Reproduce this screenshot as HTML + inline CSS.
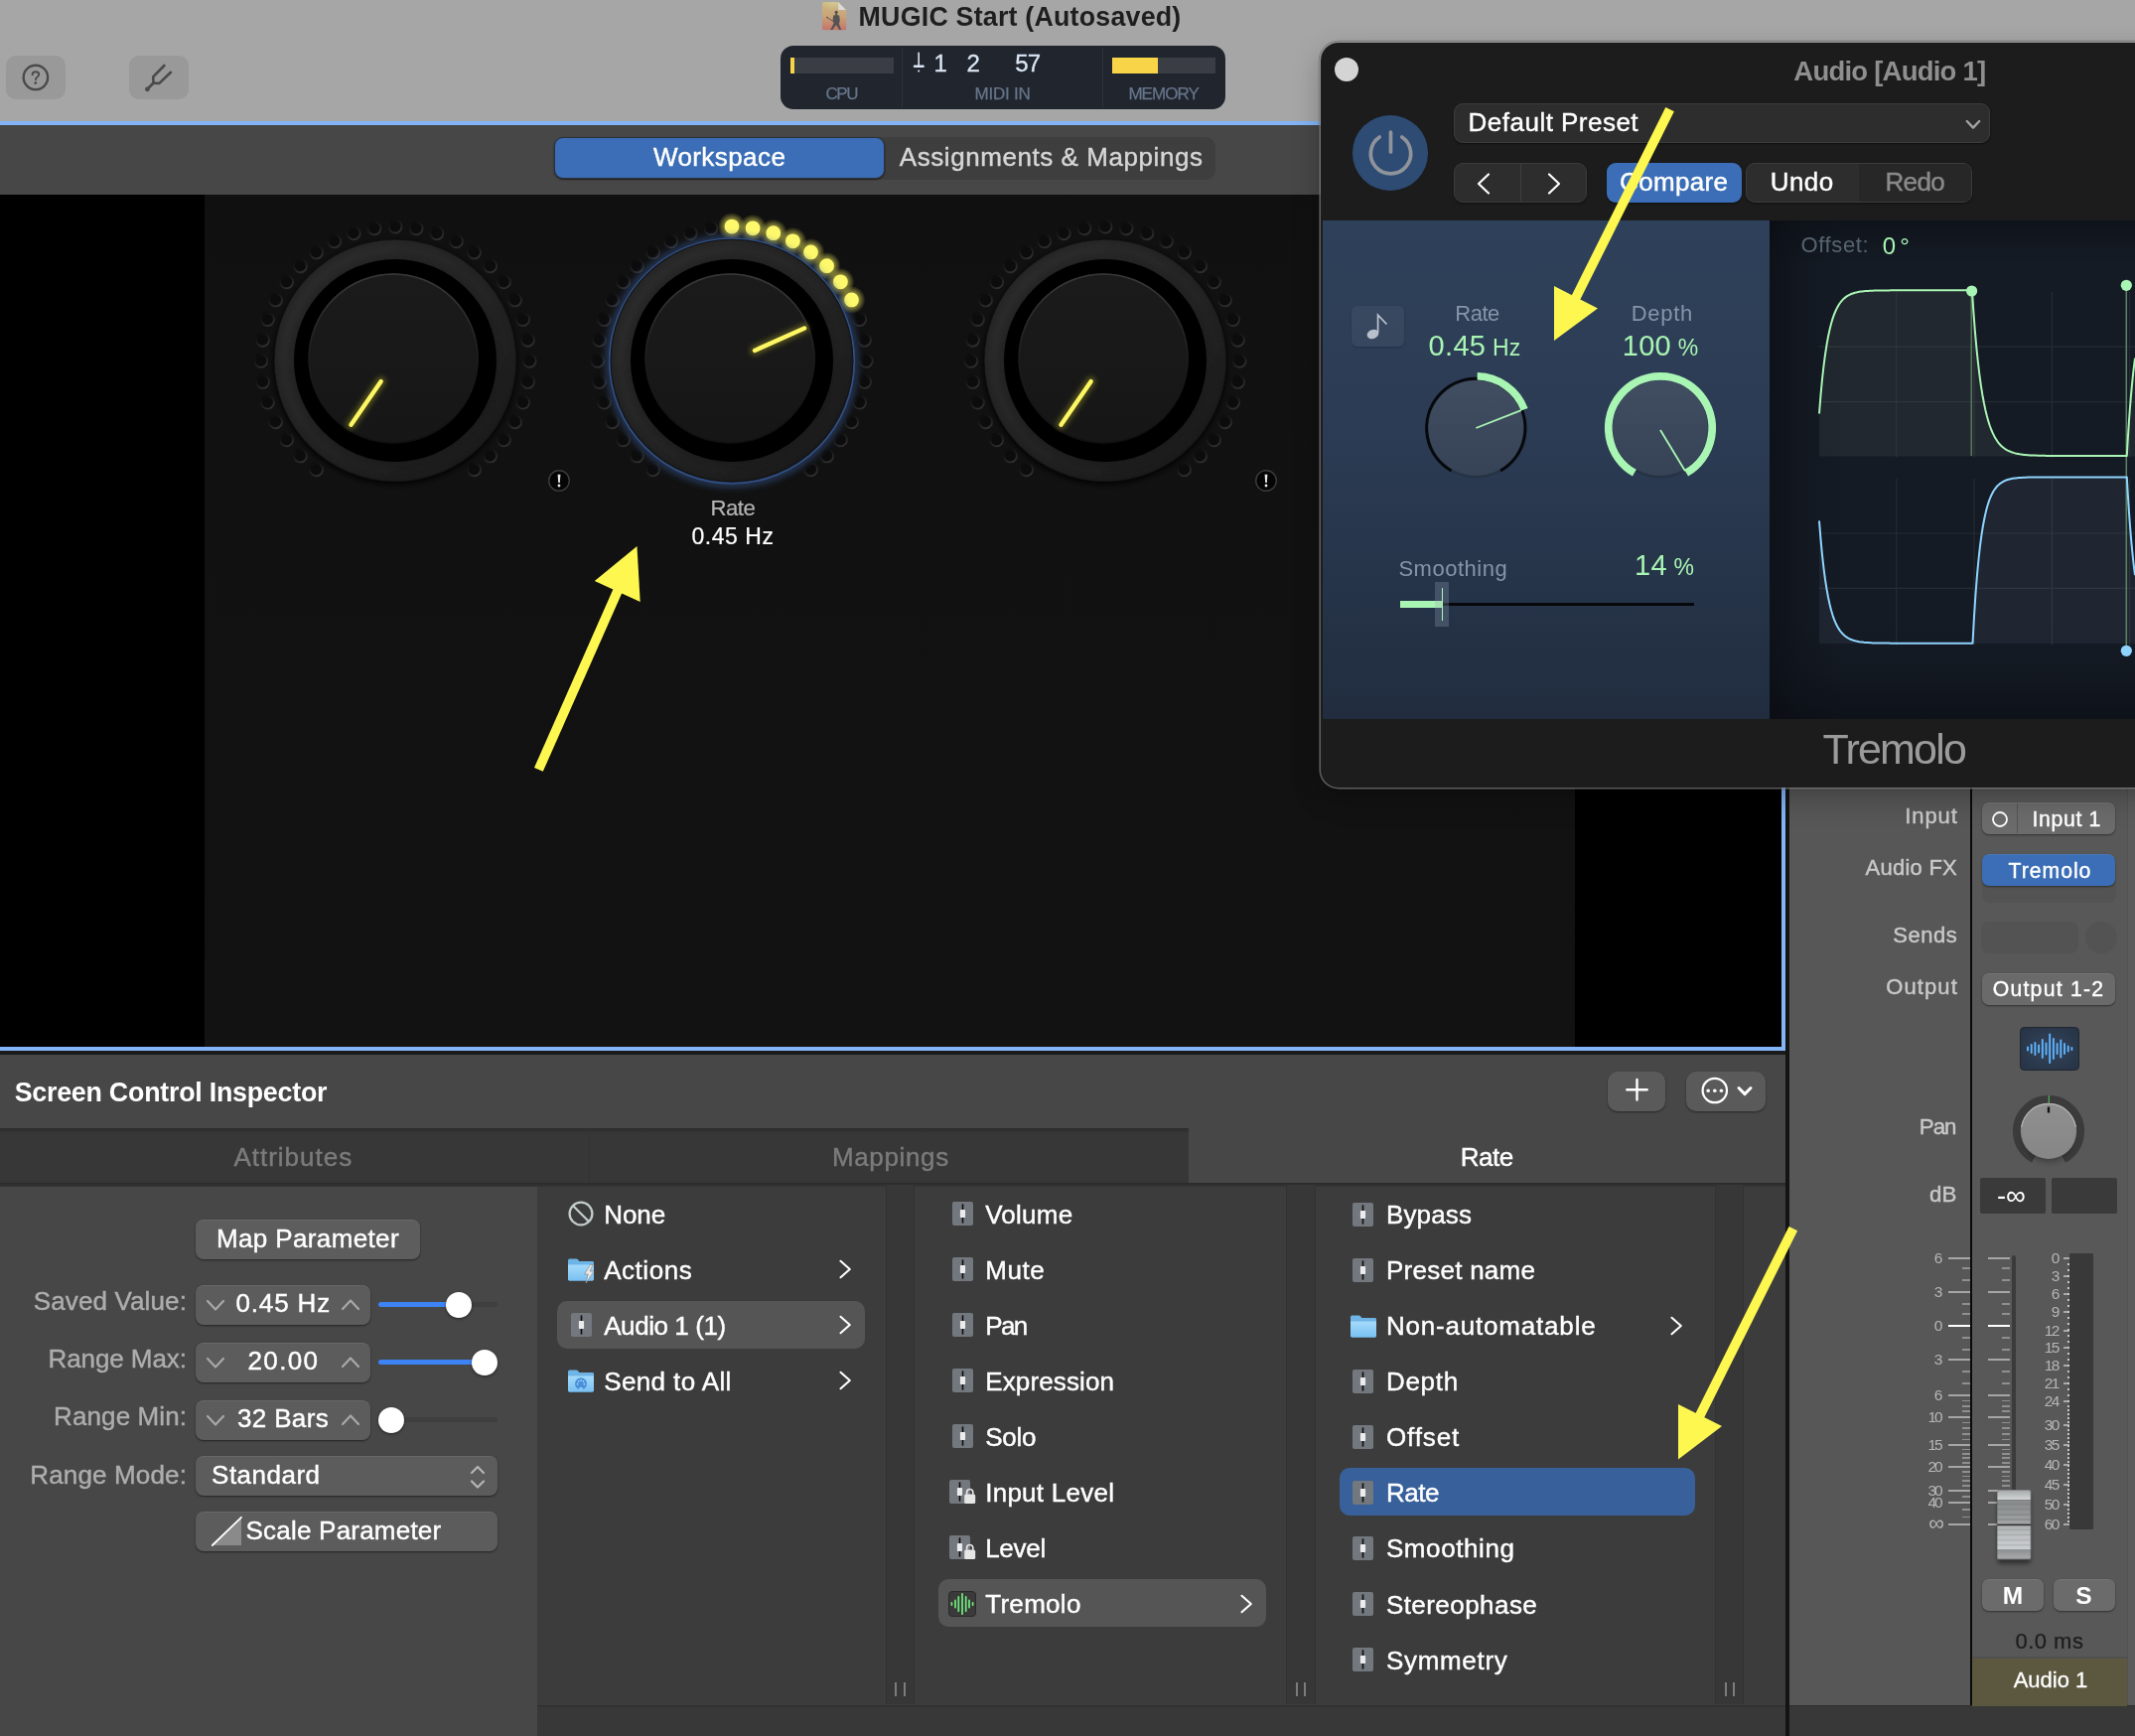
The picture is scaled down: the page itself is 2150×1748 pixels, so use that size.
<!DOCTYPE html>
<html><head><meta charset="utf-8"><title>MainStage</title>
<style>
html,body{margin:0;padding:0;background:#000;}
body{width:2150px;height:1748px;overflow:hidden;position:relative;font-family:"Liberation Sans",sans-serif;}
#r{position:absolute;left:0;top:0;width:2150px;height:1748px;overflow:hidden;}
.t{will-change:opacity;}
#r div{position:absolute;box-sizing:border-box;}
#r svg{position:absolute;overflow:visible;}
.t{height:0;}
</style></head><body><div id="r">
<div style="left:0px;top:0px;width:2150px;height:122px;background:#a6a6a6;"></div>
<div style="left:6px;top:56px;width:60px;height:44px;background:#999999;border-radius:10px;"></div>
<div style="left:130px;top:56px;width:60px;height:44px;background:#999999;border-radius:10px;"></div>
<svg style="left:0;top:0" width="220" height="122" viewBox="0 0 220 122" fill="none" stroke="#4a4a4a" stroke-width="2.4" stroke-linecap="round" stroke-linejoin="round">
<circle cx="35.9" cy="77.9" r="12.2"/>
<path d="M32.6 75.2 C32.6 73.2 34 72.2 35.9 72.2 C37.9 72.2 39.2 73.4 39.2 75 C39.2 77.4 35.9 77.4 35.9 80.2" stroke-width="1.9"/>
<circle cx="35.8" cy="83.6" r="1.4" fill="#4a4a4a" stroke="none"/>
<circle cx="148.4" cy="89.8" r="2.4" fill="#4a4a4a" stroke="none"/>
<path d="M148.4 89.8 L154.6 83.6" stroke-width="2.8"/>
<path d="M165.4 66 L154.2 77.4 L154.6 83.6 L160.4 83.9 L172 72.8" stroke-width="2.6"/>
</svg>
<svg style="left:827.9px;top:2px" width="24.2" height="28.2" viewBox="0 0 24.2 28.2">
<defs><linearGradient id="ti" x1="0" y1="0" x2="0" y2="1"><stop offset="0" stop-color="#cbb681"/><stop offset="0.5" stop-color="#c9a578"/><stop offset="1" stop-color="#c5746a"/></linearGradient>
<radialGradient id="ti2" cx=".5" cy="0" r=".6"><stop offset="0" stop-color="#d2cc94" stop-opacity=".9"/><stop offset="1" stop-color="#d2cc94" stop-opacity="0"/></radialGradient></defs>
<path d="M1.4 0 H16.2 L24.2 8 V26.8 Q24.2 28.2 22.8 28.2 H1.4 Q0 28.2 0 26.8 V1.4 Q0 0 1.4 0Z" fill="url(#ti)"/>
<path d="M1.4 0 H16.2 L24.2 8 V14 H0 V1.4 Q0 0 1.4 0Z" fill="url(#ti2)"/>
<path d="M16.2 0.2 L24 8 H16.2Z" fill="#dadada"/>
<g fill="#545454"><circle cx="14.2" cy="10.3" r="1.6"/><rect x="13.3" y="10.5" width="1.8" height="3"/>
<path d="M11.2 13.6 Q14.2 12.4 17.2 13.6 L17.8 18.5 L16.9 22 L19.3 28 H17.2 L14.1 22.9 L10.4 28 H8.2 L11.6 21.5 L10.6 18.5Z"/>
<path d="M11.4 19.6 L4.8 15.6" stroke="#545454" stroke-width="0.9" stroke-linecap="round"/><circle cx="4.9" cy="15.5" r="0.8"/></g>
</svg>
<div class="t" style="top:16.6px;font-size:26.8px;color:#1e1e1e;line-height:0;white-space:nowrap;font-weight:700;letter-spacing:0.207px;left:864.6px;">MUGIC Start (Autosaved)</div>
<div style="left:786px;top:46px;width:448px;height:64px;background:#21252e;border-radius:13px;"></div>
<div style="left:908px;top:48px;width:1px;height:60px;background:#2d323c;"></div>
<div style="left:1110px;top:48px;width:1px;height:60px;background:#2d323c;"></div>
<div style="left:796px;top:58px;width:104px;height:16px;background:#3a3d44;"></div>
<div style="left:796px;top:58px;width:4px;height:16px;background:#f8d548;"></div>
<div style="left:1120px;top:58px;width:104px;height:16px;background:#3a3d44;"></div>
<div style="left:1120px;top:58px;width:46px;height:16px;background:#f8d548;"></div>
<div class="t" style="top:94.5px;font-size:17px;color:#66758a;line-height:0;white-space:nowrap;letter-spacing:-1.397px;-webkit-text-stroke:0.25px #66758a;left:347.3015px;width:1000px;text-align:center;">CPU</div>
<div class="t" style="top:94.5px;font-size:17px;color:#66758a;line-height:0;white-space:nowrap;letter-spacing:-0.235px;-webkit-text-stroke:0.25px #66758a;left:509.4825px;width:1000px;text-align:center;">MIDI IN</div>
<div class="t" style="top:94.5px;font-size:17px;color:#66758a;line-height:0;white-space:nowrap;letter-spacing:-0.959px;-webkit-text-stroke:0.25px #66758a;left:671.6204999999999px;width:1000px;text-align:center;">MEMORY</div>
<svg style="left:918px;top:52px" width="16" height="24" viewBox="0 0 16 24" fill="none" stroke="#dbe7f5" stroke-width="1.6" stroke-linecap="round">
<path d="M7.2 1.2 V14"/><path d="M3 14.8 H11.6" stroke-width="2.5"/><circle cx="7.2" cy="19.5" r="1" fill="#dbe7f5" stroke="none"/></svg>
<div class="t" style="top:63.7px;font-size:24px;color:#dbe7f5;line-height:0;white-space:nowrap;-webkit-text-stroke:0.3px #dbe7f5;left:447.29999999999995px;width:1000px;text-align:center;">1</div>
<div class="t" style="top:63.7px;font-size:24px;color:#dbe7f5;line-height:0;white-space:nowrap;-webkit-text-stroke:0.3px #dbe7f5;left:480.20000000000005px;width:1000px;text-align:center;">2</div>
<div class="t" style="top:63.7px;font-size:24px;color:#dbe7f5;line-height:0;white-space:nowrap;letter-spacing:-0.896px;-webkit-text-stroke:0.3px #dbe7f5;left:534.6519999999999px;width:1000px;text-align:center;">57</div>
<div style="left:0px;top:126px;width:1798px;height:70px;background:#474747;"></div>
<div style="left:0px;top:122px;width:1798px;height:4px;background:#82b4f6;"></div>
<div style="left:557.5px;top:137.5px;width:666.3px;height:43.5px;background:#3e3e3e;border-radius:10px;"></div>
<div style="left:558px;top:138px;width:333px;height:42px;background:#3b6eb6;border-radius:9px;border:1px solid #2c3038;box-shadow:0 1px 2px rgba(0,0,0,.5);"></div>
<div class="t" style="top:157.6px;font-size:26px;color:#fff;line-height:0;white-space:nowrap;letter-spacing:0.429px;-webkit-text-stroke:0.42px #fff;left:224.61449999999996px;width:1000px;text-align:center;">Workspace</div>
<div class="t" style="top:157.6px;font-size:26px;color:#d6d6d6;line-height:0;white-space:nowrap;letter-spacing:0.563px;-webkit-text-stroke:0.42px #d6d6d6;left:558.6815000000001px;width:1000px;text-align:center;">Assignments &amp; Mappings</div>
<div style="left:0px;top:196px;width:1794px;height:858px;background:#000;"></div>
<div style="left:206.4px;top:196px;width:1379.2px;height:858px;background:#111;background:linear-gradient(#101010,#111 12%,#121212 100%);"></div>
<div style="left:1794px;top:122px;width:4px;height:936px;background:#82b4f6;"></div>
<div style="left:0px;top:1054px;width:1798px;height:4px;background:#82b4f6;"></div>
<div style="left:1798px;top:122px;width:4px;height:1626px;background:#141414;"></div>
<svg width="0" height="0" style="left:0;top:0"><defs>
<radialGradient id="glow"><stop offset="0.45" stop-color="#f4ee5a" stop-opacity=".6"/><stop offset="1" stop-color="#f4ee5a" stop-opacity="0"/></radialGradient>
<linearGradient id="dotedge" x1="0.2" y1="0" x2="0.8" y2="1"><stop offset="0" stop-color="#0b0b0b"/><stop offset="0.5" stop-color="#1c1c1c"/><stop offset="1" stop-color="#313131"/></linearGradient>
<linearGradient id="ringhi" x1="0" y1="0" x2="1" y2="1"><stop offset="0" stop-color="#323232"/><stop offset="0.55" stop-color="#262626"/><stop offset="1" stop-color="#171717"/></linearGradient>
<linearGradient id="ring" x1="0.15" y1="0" x2="0.85" y2="1"><stop offset="0" stop-color="#272727"/><stop offset="0.5" stop-color="#222"/><stop offset="1" stop-color="#1a1a1a"/></linearGradient>
<linearGradient id="cap" x1="0" y1="0" x2="0" y2="1"><stop offset="0" stop-color="#1b1b1b"/><stop offset="1" stop-color="#161616"/></linearGradient>
<linearGradient id="capedge" x1="0" y1="0" x2="0" y2="1"><stop offset="0" stop-color="#3a3a3a"/><stop offset="0.5" stop-color="#1c1c1c"/><stop offset="1" stop-color="#101010"/></linearGradient>
<filter id="bl" x="-20%" y="-20%" width="140%" height="140%"><feGaussianBlur stdDeviation="3"/></filter>
<filter id="bl2" x="-50%" y="-50%" width="200%" height="200%"><feGaussianBlur stdDeviation="2.5"/></filter>
</defs></svg>
<svg style="left:237.7px;top:203.0px" width="320" height="320" viewBox="-160.0 -160.0 320 320"><circle cx="-79.5" cy="109.7" r="6.5" fill="#0c0c0c" stroke="url(#dotedge)" stroke-width="1.9"/><circle cx="-95.6" cy="95.9" r="6.5" fill="#0c0c0c" stroke="url(#dotedge)" stroke-width="1.9"/><circle cx="-109.4" cy="79.8" r="6.5" fill="#0c0c0c" stroke="url(#dotedge)" stroke-width="1.9"/><circle cx="-120.5" cy="61.7" r="6.5" fill="#0c0c0c" stroke="url(#dotedge)" stroke-width="1.9"/><circle cx="-128.6" cy="42.1" r="6.5" fill="#0c0c0c" stroke="url(#dotedge)" stroke-width="1.9"/><circle cx="-133.5" cy="21.4" r="6.5" fill="#0c0c0c" stroke="url(#dotedge)" stroke-width="1.9"/><circle cx="-135.2" cy="0.3" r="6.5" fill="#0c0c0c" stroke="url(#dotedge)" stroke-width="1.9"/><circle cx="-133.5" cy="-20.8" r="6.5" fill="#0c0c0c" stroke="url(#dotedge)" stroke-width="1.9"/><circle cx="-128.6" cy="-41.5" r="6.5" fill="#0c0c0c" stroke="url(#dotedge)" stroke-width="1.9"/><circle cx="-120.5" cy="-61.1" r="6.5" fill="#0c0c0c" stroke="url(#dotedge)" stroke-width="1.9"/><circle cx="-109.4" cy="-79.2" r="6.5" fill="#0c0c0c" stroke="url(#dotedge)" stroke-width="1.9"/><circle cx="-95.6" cy="-95.3" r="6.5" fill="#0c0c0c" stroke="url(#dotedge)" stroke-width="1.9"/><circle cx="-79.5" cy="-109.1" r="6.5" fill="#0c0c0c" stroke="url(#dotedge)" stroke-width="1.9"/><circle cx="-61.4" cy="-120.2" r="6.5" fill="#0c0c0c" stroke="url(#dotedge)" stroke-width="1.9"/><circle cx="-41.8" cy="-128.3" r="6.5" fill="#0c0c0c" stroke="url(#dotedge)" stroke-width="1.9"/><circle cx="-21.1" cy="-133.2" r="6.5" fill="#0c0c0c" stroke="url(#dotedge)" stroke-width="1.9"/><circle cx="0.0" cy="-134.9" r="6.5" fill="#0c0c0c" stroke="url(#dotedge)" stroke-width="1.9"/><circle cx="21.1" cy="-133.2" r="6.5" fill="#0c0c0c" stroke="url(#dotedge)" stroke-width="1.9"/><circle cx="41.8" cy="-128.3" r="6.5" fill="#0c0c0c" stroke="url(#dotedge)" stroke-width="1.9"/><circle cx="61.4" cy="-120.2" r="6.5" fill="#0c0c0c" stroke="url(#dotedge)" stroke-width="1.9"/><circle cx="79.5" cy="-109.1" r="6.5" fill="#0c0c0c" stroke="url(#dotedge)" stroke-width="1.9"/><circle cx="95.6" cy="-95.3" r="6.5" fill="#0c0c0c" stroke="url(#dotedge)" stroke-width="1.9"/><circle cx="109.4" cy="-79.2" r="6.5" fill="#0c0c0c" stroke="url(#dotedge)" stroke-width="1.9"/><circle cx="120.5" cy="-61.1" r="6.5" fill="#0c0c0c" stroke="url(#dotedge)" stroke-width="1.9"/><circle cx="128.6" cy="-41.5" r="6.5" fill="#0c0c0c" stroke="url(#dotedge)" stroke-width="1.9"/><circle cx="133.5" cy="-20.8" r="6.5" fill="#0c0c0c" stroke="url(#dotedge)" stroke-width="1.9"/><circle cx="135.2" cy="0.3" r="6.5" fill="#0c0c0c" stroke="url(#dotedge)" stroke-width="1.9"/><circle cx="133.5" cy="21.4" r="6.5" fill="#0c0c0c" stroke="url(#dotedge)" stroke-width="1.9"/><circle cx="128.6" cy="42.1" r="6.5" fill="#0c0c0c" stroke="url(#dotedge)" stroke-width="1.9"/><circle cx="120.5" cy="61.7" r="6.5" fill="#0c0c0c" stroke="url(#dotedge)" stroke-width="1.9"/><circle cx="109.4" cy="79.8" r="6.5" fill="#0c0c0c" stroke="url(#dotedge)" stroke-width="1.9"/><circle cx="95.6" cy="95.9" r="6.5" fill="#0c0c0c" stroke="url(#dotedge)" stroke-width="1.9"/><circle cx="79.5" cy="109.7" r="6.5" fill="#0c0c0c" stroke="url(#dotedge)" stroke-width="1.9"/><circle cx="0" cy="2.5" r="122" fill="#060606" filter="url(#bl)"/><circle cx="0" cy="0" r="122.3" fill="#141414"/><circle cx="0" cy="0" r="121.3" fill="url(#ring)"/><circle cx="0" cy="0" r="112" fill="none" stroke="url(#ringhi)" stroke-width="10" opacity=".55" filter="url(#bl2)"/><circle cx="0" cy="0" r="102" fill="#000"/><circle cx="-1.9" cy="-2.1" r="85.6" fill="url(#cap)"/><circle cx="-1.9" cy="-2.1" r="84.9" fill="none" stroke="url(#capedge)" stroke-width="1.6"/><line x1="-14.3" y1="21.0" x2="-44.5" y2="64.7" stroke="#c9c22a" stroke-width="10" stroke-linecap="round" opacity=".33" filter="url(#bl2)"/><line x1="-14.3" y1="21.0" x2="-44.5" y2="64.7" stroke="#fdf764" stroke-width="4.4" stroke-linecap="round"/></svg>
<svg style="left:577.2px;top:203.0px" width="320" height="320" viewBox="-160.0 -160.0 320 320"><circle cx="-79.5" cy="109.7" r="6.5" fill="#0c0c0c" stroke="url(#dotedge)" stroke-width="1.9"/><circle cx="-95.6" cy="95.9" r="6.5" fill="#0c0c0c" stroke="url(#dotedge)" stroke-width="1.9"/><circle cx="-109.4" cy="79.8" r="6.5" fill="#0c0c0c" stroke="url(#dotedge)" stroke-width="1.9"/><circle cx="-120.5" cy="61.7" r="6.5" fill="#0c0c0c" stroke="url(#dotedge)" stroke-width="1.9"/><circle cx="-128.6" cy="42.1" r="6.5" fill="#0c0c0c" stroke="url(#dotedge)" stroke-width="1.9"/><circle cx="-133.5" cy="21.4" r="6.5" fill="#0c0c0c" stroke="url(#dotedge)" stroke-width="1.9"/><circle cx="-135.2" cy="0.3" r="6.5" fill="#0c0c0c" stroke="url(#dotedge)" stroke-width="1.9"/><circle cx="-133.5" cy="-20.8" r="6.5" fill="#0c0c0c" stroke="url(#dotedge)" stroke-width="1.9"/><circle cx="-128.6" cy="-41.5" r="6.5" fill="#0c0c0c" stroke="url(#dotedge)" stroke-width="1.9"/><circle cx="-120.5" cy="-61.1" r="6.5" fill="#0c0c0c" stroke="url(#dotedge)" stroke-width="1.9"/><circle cx="-109.4" cy="-79.2" r="6.5" fill="#0c0c0c" stroke="url(#dotedge)" stroke-width="1.9"/><circle cx="-95.6" cy="-95.3" r="6.5" fill="#0c0c0c" stroke="url(#dotedge)" stroke-width="1.9"/><circle cx="-79.5" cy="-109.1" r="6.5" fill="#0c0c0c" stroke="url(#dotedge)" stroke-width="1.9"/><circle cx="-61.4" cy="-120.2" r="6.5" fill="#0c0c0c" stroke="url(#dotedge)" stroke-width="1.9"/><circle cx="-41.8" cy="-128.3" r="6.5" fill="#0c0c0c" stroke="url(#dotedge)" stroke-width="1.9"/><circle cx="-21.1" cy="-133.2" r="6.5" fill="#0c0c0c" stroke="url(#dotedge)" stroke-width="1.9"/><circle cx="0.0" cy="-134.9" r="14" fill="url(#glow)"/><circle cx="21.1" cy="-133.2" r="14" fill="url(#glow)"/><circle cx="41.8" cy="-128.3" r="14" fill="url(#glow)"/><circle cx="61.4" cy="-120.2" r="14" fill="url(#glow)"/><circle cx="79.5" cy="-109.1" r="14" fill="url(#glow)"/><circle cx="95.6" cy="-95.3" r="14" fill="url(#glow)"/><circle cx="109.4" cy="-79.2" r="14" fill="url(#glow)"/><circle cx="120.5" cy="-61.1" r="14" fill="url(#glow)"/><circle cx="128.6" cy="-41.5" r="6.5" fill="#0c0c0c" stroke="url(#dotedge)" stroke-width="1.9"/><circle cx="133.5" cy="-20.8" r="6.5" fill="#0c0c0c" stroke="url(#dotedge)" stroke-width="1.9"/><circle cx="135.2" cy="0.3" r="6.5" fill="#0c0c0c" stroke="url(#dotedge)" stroke-width="1.9"/><circle cx="133.5" cy="21.4" r="6.5" fill="#0c0c0c" stroke="url(#dotedge)" stroke-width="1.9"/><circle cx="128.6" cy="42.1" r="6.5" fill="#0c0c0c" stroke="url(#dotedge)" stroke-width="1.9"/><circle cx="120.5" cy="61.7" r="6.5" fill="#0c0c0c" stroke="url(#dotedge)" stroke-width="1.9"/><circle cx="109.4" cy="79.8" r="6.5" fill="#0c0c0c" stroke="url(#dotedge)" stroke-width="1.9"/><circle cx="95.6" cy="95.9" r="6.5" fill="#0c0c0c" stroke="url(#dotedge)" stroke-width="1.9"/><circle cx="79.5" cy="109.7" r="6.5" fill="#0c0c0c" stroke="url(#dotedge)" stroke-width="1.9"/><circle cx="0.0" cy="-134.9" r="7.4" fill="#fef96c"/><circle cx="21.1" cy="-133.2" r="7.4" fill="#fef96c"/><circle cx="41.8" cy="-128.3" r="7.4" fill="#fef96c"/><circle cx="61.4" cy="-120.2" r="7.4" fill="#fef96c"/><circle cx="79.5" cy="-109.1" r="7.4" fill="#fef96c"/><circle cx="95.6" cy="-95.3" r="7.4" fill="#fef96c"/><circle cx="109.4" cy="-79.2" r="7.4" fill="#fef96c"/><circle cx="120.5" cy="-61.1" r="7.4" fill="#fef96c"/><circle cx="0" cy="0.5" r="124.5" fill="none" stroke="#3d64a6" stroke-width="6" opacity=".5" filter="url(#bl)"/><circle cx="0" cy="0.5" r="123.3" fill="none" stroke="#314e82" stroke-width="1.7"/><circle cx="0" cy="0" r="122.3" fill="#141414"/><circle cx="0" cy="0" r="121.3" fill="url(#ring)"/><circle cx="0" cy="0" r="112" fill="none" stroke="url(#ringhi)" stroke-width="10" opacity=".55" filter="url(#bl2)"/><circle cx="0" cy="0" r="102" fill="#000"/><circle cx="-1.9" cy="-2.1" r="85.6" fill="url(#cap)"/><circle cx="-1.9" cy="-2.1" r="84.9" fill="none" stroke="url(#capedge)" stroke-width="1.6"/><line x1="23.0" y1="-10.1" x2="73.1" y2="-32.5" stroke="#c9c22a" stroke-width="10" stroke-linecap="round" opacity=".33" filter="url(#bl2)"/><line x1="23.0" y1="-10.1" x2="73.1" y2="-32.5" stroke="#fdf764" stroke-width="4.4" stroke-linecap="round"/></svg>
<svg style="left:952.5px;top:203.0px" width="320" height="320" viewBox="-160.0 -160.0 320 320"><circle cx="-79.5" cy="109.7" r="6.5" fill="#0c0c0c" stroke="url(#dotedge)" stroke-width="1.9"/><circle cx="-95.6" cy="95.9" r="6.5" fill="#0c0c0c" stroke="url(#dotedge)" stroke-width="1.9"/><circle cx="-109.4" cy="79.8" r="6.5" fill="#0c0c0c" stroke="url(#dotedge)" stroke-width="1.9"/><circle cx="-120.5" cy="61.7" r="6.5" fill="#0c0c0c" stroke="url(#dotedge)" stroke-width="1.9"/><circle cx="-128.6" cy="42.1" r="6.5" fill="#0c0c0c" stroke="url(#dotedge)" stroke-width="1.9"/><circle cx="-133.5" cy="21.4" r="6.5" fill="#0c0c0c" stroke="url(#dotedge)" stroke-width="1.9"/><circle cx="-135.2" cy="0.3" r="6.5" fill="#0c0c0c" stroke="url(#dotedge)" stroke-width="1.9"/><circle cx="-133.5" cy="-20.8" r="6.5" fill="#0c0c0c" stroke="url(#dotedge)" stroke-width="1.9"/><circle cx="-128.6" cy="-41.5" r="6.5" fill="#0c0c0c" stroke="url(#dotedge)" stroke-width="1.9"/><circle cx="-120.5" cy="-61.1" r="6.5" fill="#0c0c0c" stroke="url(#dotedge)" stroke-width="1.9"/><circle cx="-109.4" cy="-79.2" r="6.5" fill="#0c0c0c" stroke="url(#dotedge)" stroke-width="1.9"/><circle cx="-95.6" cy="-95.3" r="6.5" fill="#0c0c0c" stroke="url(#dotedge)" stroke-width="1.9"/><circle cx="-79.5" cy="-109.1" r="6.5" fill="#0c0c0c" stroke="url(#dotedge)" stroke-width="1.9"/><circle cx="-61.4" cy="-120.2" r="6.5" fill="#0c0c0c" stroke="url(#dotedge)" stroke-width="1.9"/><circle cx="-41.8" cy="-128.3" r="6.5" fill="#0c0c0c" stroke="url(#dotedge)" stroke-width="1.9"/><circle cx="-21.1" cy="-133.2" r="6.5" fill="#0c0c0c" stroke="url(#dotedge)" stroke-width="1.9"/><circle cx="0.0" cy="-134.9" r="6.5" fill="#0c0c0c" stroke="url(#dotedge)" stroke-width="1.9"/><circle cx="21.1" cy="-133.2" r="6.5" fill="#0c0c0c" stroke="url(#dotedge)" stroke-width="1.9"/><circle cx="41.8" cy="-128.3" r="6.5" fill="#0c0c0c" stroke="url(#dotedge)" stroke-width="1.9"/><circle cx="61.4" cy="-120.2" r="6.5" fill="#0c0c0c" stroke="url(#dotedge)" stroke-width="1.9"/><circle cx="79.5" cy="-109.1" r="6.5" fill="#0c0c0c" stroke="url(#dotedge)" stroke-width="1.9"/><circle cx="95.6" cy="-95.3" r="6.5" fill="#0c0c0c" stroke="url(#dotedge)" stroke-width="1.9"/><circle cx="109.4" cy="-79.2" r="6.5" fill="#0c0c0c" stroke="url(#dotedge)" stroke-width="1.9"/><circle cx="120.5" cy="-61.1" r="6.5" fill="#0c0c0c" stroke="url(#dotedge)" stroke-width="1.9"/><circle cx="128.6" cy="-41.5" r="6.5" fill="#0c0c0c" stroke="url(#dotedge)" stroke-width="1.9"/><circle cx="133.5" cy="-20.8" r="6.5" fill="#0c0c0c" stroke="url(#dotedge)" stroke-width="1.9"/><circle cx="135.2" cy="0.3" r="6.5" fill="#0c0c0c" stroke="url(#dotedge)" stroke-width="1.9"/><circle cx="133.5" cy="21.4" r="6.5" fill="#0c0c0c" stroke="url(#dotedge)" stroke-width="1.9"/><circle cx="128.6" cy="42.1" r="6.5" fill="#0c0c0c" stroke="url(#dotedge)" stroke-width="1.9"/><circle cx="120.5" cy="61.7" r="6.5" fill="#0c0c0c" stroke="url(#dotedge)" stroke-width="1.9"/><circle cx="109.4" cy="79.8" r="6.5" fill="#0c0c0c" stroke="url(#dotedge)" stroke-width="1.9"/><circle cx="95.6" cy="95.9" r="6.5" fill="#0c0c0c" stroke="url(#dotedge)" stroke-width="1.9"/><circle cx="79.5" cy="109.7" r="6.5" fill="#0c0c0c" stroke="url(#dotedge)" stroke-width="1.9"/><circle cx="0" cy="2.5" r="122" fill="#060606" filter="url(#bl)"/><circle cx="0" cy="0" r="122.3" fill="#141414"/><circle cx="0" cy="0" r="121.3" fill="url(#ring)"/><circle cx="0" cy="0" r="112" fill="none" stroke="url(#ringhi)" stroke-width="10" opacity=".55" filter="url(#bl2)"/><circle cx="0" cy="0" r="102" fill="#000"/><circle cx="-1.9" cy="-2.1" r="85.6" fill="url(#cap)"/><circle cx="-1.9" cy="-2.1" r="84.9" fill="none" stroke="url(#capedge)" stroke-width="1.6"/><line x1="-14.3" y1="21.0" x2="-44.5" y2="64.7" stroke="#c9c22a" stroke-width="10" stroke-linecap="round" opacity=".33" filter="url(#bl2)"/><line x1="-14.3" y1="21.0" x2="-44.5" y2="64.7" stroke="#fdf764" stroke-width="4.4" stroke-linecap="round"/></svg>
<svg style="left:548.5px;top:469.5px" width="28" height="28" viewBox="-14 -14 28 28"><circle r="10.3" fill="#050505" stroke="#3c3c3c" stroke-width="1.4"/><path d="M-1.4 -6.2 H1.4 L0.8 2 H-0.8Z" fill="#e8e8e8"/><circle cx="0" cy="5" r="1.4" fill="#e8e8e8"/></svg>
<svg style="left:1261px;top:470px" width="28" height="28" viewBox="-14 -14 28 28"><circle r="10.3" fill="#050505" stroke="#3c3c3c" stroke-width="1.4"/><path d="M-1.4 -6.2 H1.4 L0.8 2 H-0.8Z" fill="#e8e8e8"/><circle cx="0" cy="5" r="1.4" fill="#e8e8e8"/></svg>
<div class="t" style="top:511.7px;font-size:22.2px;color:#b4b4b4;line-height:0;white-space:nowrap;letter-spacing:-0.498px;-webkit-text-stroke:0.2px #b4b4b4;left:237.95100000000005px;width:1000px;text-align:center;">Rate</div>
<div class="t" style="top:539.5px;font-size:23px;color:#fff;line-height:0;white-space:nowrap;letter-spacing:0.556px;-webkit-text-stroke:0.2px #fff;left:237.97800000000004px;width:1000px;text-align:center;">0.45 Hz</div>
<div style="left:0px;top:1058px;width:1798px;height:4px;background:#1b1b1b;"></div>
<div style="left:0px;top:1062px;width:1798px;height:74px;background:#474747;"></div>
<div class="t" style="top:1100px;font-size:26.8px;color:#fff;line-height:0;white-space:nowrap;font-weight:700;letter-spacing:-0.234px;left:14.7px;">Screen Control Inspector</div>
<div style="left:1619px;top:1079px;width:58px;height:40px;background:#5a5a5a;border-radius:10px;box-shadow:0 1px 2px rgba(0,0,0,.45);"></div>
<div style="left:1698px;top:1079px;width:80px;height:40px;background:#5a5a5a;border-radius:10px;box-shadow:0 1px 2px rgba(0,0,0,.45);"></div>
<svg style="left:1619px;top:1079px" width="160" height="40" viewBox="1619 1079 160 40" fill="none" stroke="#fff" stroke-linecap="round" stroke-linejoin="round">
<path d="M1638.3 1097.3 H1658.7 M1648.5 1087 V1107.6" stroke-width="2.4"/>
<circle cx="1726.8" cy="1098" r="12.2" stroke-width="2.2"/>
<circle cx="1720.2" cy="1098.3" r="1.8" fill="#fff" stroke="none"/><circle cx="1726.8" cy="1098.3" r="1.8" fill="#fff" stroke="none"/><circle cx="1733.4" cy="1098.3" r="1.8" fill="#fff" stroke="none"/>
<path d="M1751 1095.5 L1757 1101.6 L1763 1095.5" stroke-width="3"/>
</svg>
<div style="left:0px;top:1136px;width:1197px;height:56px;background:#373737;background:linear-gradient(#2b2b2b,#373737 5px);"></div>
<div style="left:593px;top:1138px;width:1px;height:54px;background:#333;"></div>
<div style="left:1197px;top:1136px;width:601px;height:56px;background:#474747;"></div>
<div class="t" style="top:1164.5px;font-size:26px;color:#7b7b7b;line-height:0;white-space:nowrap;letter-spacing:0.986px;-webkit-text-stroke:0.42px #7b7b7b;left:-204.707px;width:1000px;text-align:center;">Attributes</div>
<div class="t" style="top:1165px;font-size:26px;color:#7b7b7b;line-height:0;white-space:nowrap;letter-spacing:0.652px;-webkit-text-stroke:0.42px #7b7b7b;left:396.92600000000004px;width:1000px;text-align:center;">Mappings</div>
<div class="t" style="top:1165px;font-size:26px;color:#fff;line-height:0;white-space:nowrap;letter-spacing:-0.474px;-webkit-text-stroke:0.42px #fff;left:997.263px;width:1000px;text-align:center;">Rate</div>
<div style="left:0px;top:1192px;width:541px;height:556px;background:#474747;"></div>
<div style="left:541px;top:1192px;width:1257px;height:556px;background:#3c3c3c;"></div>
<div style="left:0px;top:1191px;width:1798px;height:3.5px;background:#2f2f2f;background:linear-gradient(#2a2a2a,#363636);"></div>
<div style="left:541px;top:1718px;width:1257px;height:30px;background:#383838;"></div>
<div style="left:541px;top:1717.3px;width:1257px;height:2px;background:#323232;"></div>
<div style="left:891.7px;top:1193px;width:29.3px;height:523px;background:#373737;border-left:1.2px solid #323232;border-right:1.2px solid #323232;"></div>
<div style="left:1295.4px;top:1193px;width:29.3px;height:523px;background:#373737;border-left:1.2px solid #323232;border-right:1.2px solid #323232;"></div>
<div style="left:1727.2px;top:1193px;width:29.3px;height:523px;background:#373737;border-left:1.2px solid #323232;border-right:1.2px solid #323232;"></div>
<div style="left:901.3000000000001px;top:1693.7px;width:2.1px;height:14.3px;background:#7c7c7c;"></div>
<div style="left:909.6px;top:1693.7px;width:2.1px;height:14.3px;background:#7c7c7c;"></div>
<div style="left:1305.0px;top:1693.7px;width:2.1px;height:14.3px;background:#7c7c7c;"></div>
<div style="left:1313.3000000000002px;top:1693.7px;width:2.1px;height:14.3px;background:#7c7c7c;"></div>
<div style="left:1736.8px;top:1693.7px;width:2.1px;height:14.3px;background:#7c7c7c;"></div>
<div style="left:1745.1000000000001px;top:1693.7px;width:2.1px;height:14.3px;background:#7c7c7c;"></div>
<div style="left:197px;top:1228px;width:226px;height:40px;background:#5d5d5d;border-radius:8px;box-shadow:0 1px 2px rgba(0,0,0,.5), inset 0 1px 0 rgba(255,255,255,.08);"></div>
<div class="t" style="top:1246.7px;font-size:26px;color:#fff;line-height:0;white-space:nowrap;letter-spacing:0.368px;-webkit-text-stroke:0.42px #fff;left:-190.016px;width:1000px;text-align:center;">Map Parameter</div>
<div class="t" style="top:1310.1999999999998px;font-size:26px;color:#adadad;line-height:0;white-space:nowrap;letter-spacing:0.123px;-webkit-text-stroke:0.42px #adadad;left:-811.977px;width:1000px;text-align:right;">Saved Value:</div>
<div style="left:197px;top:1293.6px;width:176px;height:40px;background:#5c5c5c;border-radius:8px;box-shadow:0 1px 2px rgba(0,0,0,.5), inset 0 1px 0 rgba(255,255,255,.08);"></div>
<svg style="left:206.5px;top:1306.1px" width="20" height="16" viewBox="-10 -8 20 16" fill="none" stroke="#a8a8a8" stroke-width="2.2" stroke-linecap="round" stroke-linejoin="round"><path d="M-8 -4 L0 4.5 L8 -4"/></svg>
<svg style="left:342.5px;top:1305.6px" width="20" height="16" viewBox="-10 -8 20 16" fill="none" stroke="#a8a8a8" stroke-width="2.2" stroke-linecap="round" stroke-linejoin="round"><path d="M-8 4 L0 -4.5 L8 4"/></svg>
<div class="t" style="top:1312.3999999999999px;font-size:26px;color:#fff;line-height:0;white-space:nowrap;letter-spacing:0.866px;-webkit-text-stroke:0.42px #fff;left:-214.767px;width:1000px;text-align:center;">0.45 Hz</div>
<div style="left:381px;top:1311.1px;width:120px;height:5px;background:#3f3f3f;border-radius:3px;"></div>
<div style="left:381px;top:1311.1px;width:80.5px;height:5px;background:#3d83f3;border-radius:3px;"></div>
<div style="left:448.5px;top:1300.6px;width:26px;height:26px;background:#fff;border-radius:50%;box-shadow:0 1px 3px rgba(0,0,0,.5);"></div>
<div class="t" style="top:1368.1999999999998px;font-size:26px;color:#adadad;line-height:0;white-space:nowrap;letter-spacing:-0.087px;-webkit-text-stroke:0.42px #adadad;left:-812.187px;width:1000px;text-align:right;">Range Max:</div>
<div style="left:197px;top:1351.6px;width:176px;height:40px;background:#5c5c5c;border-radius:8px;box-shadow:0 1px 2px rgba(0,0,0,.5), inset 0 1px 0 rgba(255,255,255,.08);"></div>
<svg style="left:206.5px;top:1364.1px" width="20" height="16" viewBox="-10 -8 20 16" fill="none" stroke="#a8a8a8" stroke-width="2.2" stroke-linecap="round" stroke-linejoin="round"><path d="M-8 -4 L0 4.5 L8 -4"/></svg>
<svg style="left:342.5px;top:1363.6px" width="20" height="16" viewBox="-10 -8 20 16" fill="none" stroke="#a8a8a8" stroke-width="2.2" stroke-linecap="round" stroke-linejoin="round"><path d="M-8 4 L0 -4.5 L8 4"/></svg>
<div class="t" style="top:1370.3999999999999px;font-size:26px;color:#fff;line-height:0;white-space:nowrap;letter-spacing:1.359px;-webkit-text-stroke:0.42px #fff;left:-214.5205px;width:1000px;text-align:center;">20.00</div>
<div style="left:381px;top:1369.1px;width:120px;height:5px;background:#3f3f3f;border-radius:3px;"></div>
<div style="left:381px;top:1369.1px;width:107px;height:5px;background:#3d83f3;border-radius:3px;"></div>
<div style="left:475px;top:1358.6px;width:26px;height:26px;background:#fff;border-radius:50%;box-shadow:0 1px 3px rgba(0,0,0,.5);"></div>
<div class="t" style="top:1426.1999999999998px;font-size:26px;color:#adadad;line-height:0;white-space:nowrap;letter-spacing:0.093px;-webkit-text-stroke:0.42px #adadad;left:-812.0070000000001px;width:1000px;text-align:right;">Range Min:</div>
<div style="left:197px;top:1409.6px;width:176px;height:40px;background:#5c5c5c;border-radius:8px;box-shadow:0 1px 2px rgba(0,0,0,.5), inset 0 1px 0 rgba(255,255,255,.08);"></div>
<svg style="left:206.5px;top:1422.1px" width="20" height="16" viewBox="-10 -8 20 16" fill="none" stroke="#a8a8a8" stroke-width="2.2" stroke-linecap="round" stroke-linejoin="round"><path d="M-8 -4 L0 4.5 L8 -4"/></svg>
<svg style="left:342.5px;top:1421.6px" width="20" height="16" viewBox="-10 -8 20 16" fill="none" stroke="#a8a8a8" stroke-width="2.2" stroke-linecap="round" stroke-linejoin="round"><path d="M-8 4 L0 -4.5 L8 4"/></svg>
<div class="t" style="top:1428.3999999999999px;font-size:26px;color:#fff;line-height:0;white-space:nowrap;letter-spacing:0.366px;-webkit-text-stroke:0.42px #fff;left:-215.017px;width:1000px;text-align:center;">32 Bars</div>
<div style="left:381px;top:1427.1px;width:120px;height:5px;background:#3f3f3f;border-radius:3px;"></div>
<div style="left:380.5px;top:1416.6px;width:26px;height:26px;background:#fff;border-radius:50%;box-shadow:0 1px 3px rgba(0,0,0,.5);"></div>
<div class="t" style="top:1484.6px;font-size:26px;color:#adadad;line-height:0;white-space:nowrap;letter-spacing:0.159px;-webkit-text-stroke:0.42px #adadad;left:-811.941px;width:1000px;text-align:right;">Range Mode:</div>
<div style="left:197px;top:1466px;width:304px;height:40px;background:#5c5c5c;border-radius:8px;box-shadow:0 1px 2px rgba(0,0,0,.5), inset 0 1px 0 rgba(255,255,255,.08);"></div>
<div class="t" style="top:1485px;font-size:26px;color:#fff;line-height:0;white-space:nowrap;letter-spacing:0.482px;-webkit-text-stroke:0.42px #fff;left:213.1px;">Standard</div>
<svg style="left:471px;top:1473px" width="20" height="28" viewBox="-10 -14 20 28" fill="none" stroke="#b4b4b4" stroke-width="2.2" stroke-linecap="round" stroke-linejoin="round"><path d="M-6 -4 L0 -10 L6 -4 M-6 4.5 L0 10.5 L6 4.5"/></svg>
<div style="left:197px;top:1522px;width:304px;height:40px;background:#5c5c5c;border-radius:8px;box-shadow:0 1px 2px rgba(0,0,0,.5), inset 0 1px 0 rgba(255,255,255,.08);"></div>
<svg style="left:213px;top:1527px" width="31" height="30" viewBox="0 0 31 30"><path d="M1 29 L30 1 V29Z" fill="#8a8a8a"/><path d="M0.8 29 L30 0.8" stroke="#fff" stroke-width="1.8" stroke-linecap="round"/></svg>
<div class="t" style="top:1541px;font-size:26px;color:#fff;line-height:0;white-space:nowrap;letter-spacing:0.218px;-webkit-text-stroke:0.42px #fff;left:247.5px;">Scale Parameter</div>
<div style="left:561px;top:1310px;width:310px;height:48px;background:#555;border-radius:10px;"></div>
<svg style="left:572px;top:1209px" width="26" height="26" viewBox="-13 -13 26 26" fill="none" stroke="#c3cbcb" stroke-width="2.3"><circle r="11.4"/><path d="M-8 -8 L8 8"/></svg>
<div class="t" style="top:1222.8999999999999px;font-size:26px;color:#fff;line-height:0;white-space:nowrap;letter-spacing:-0.053px;-webkit-text-stroke:0.42px #fff;left:608.2px;">None</div>
<svg style="left:572px;top:1266.83px" width="30" height="28" viewBox="0 0 30 28"><defs><linearGradient id="fg" x1="0" y1="0" x2="0" y2="1"><stop offset="0" stop-color="#a5dbfb"/><stop offset="1" stop-color="#79c0f2"/></linearGradient></defs><path d="M0 2.2 Q0 0.6 1.6 0.6 H8.2 Q9.4 0.6 10.2 1.6 L11.4 3 H24.6 Q26 3 26 4.4 V21 Q26 22.4 24.6 22.4 H1.4 Q0 22.4 0 21Z" fill="#6fb4e6"/><path d="M0 6.4 H26 V21 Q26 22.4 24.6 22.4 H1.4 Q0 22.4 0 21Z" fill="url(#fg)"/><path d="M22.5 6.5 L16.5 16 H20.2 L18 25 L26.2 13 H22 L25.2 6.5Z" fill="#e8e8e8" stroke="#8a8a8a" stroke-width="0.7"/></svg>
<div class="t" style="top:1278.9299999999998px;font-size:26px;color:#fff;line-height:0;white-space:nowrap;letter-spacing:0.539px;-webkit-text-stroke:0.42px #fff;left:608.2px;">Actions</div>
<svg style="left:843px;top:1267.33px" width="16" height="22" viewBox="-8 -11 16 22" fill="none" stroke="#fff" stroke-width="2.1" stroke-linecap="round" stroke-linejoin="round"><path d="M-4.5 -8.2 L4.8 0 L-4.5 8.2"/></svg>
<svg style="left:574.5px;top:1322.36px" width="30" height="28" viewBox="0 0 30 28"><rect x="0" y="0" width="21" height="24" rx="2" fill="#73777e"/><rect x="9.7" y="2.4" width="1.6" height="19.2" fill="#0c0c0c"/><rect x="7.9" y="8" width="5.2" height="8" rx="0.7" fill="#ececec"/></svg>
<div class="t" style="top:1334.9599999999998px;font-size:26px;color:#fff;line-height:0;white-space:nowrap;letter-spacing:-0.429px;-webkit-text-stroke:0.42px #fff;left:608.2px;">Audio 1 (1)</div>
<svg style="left:843px;top:1323.36px" width="16" height="22" viewBox="-8 -11 16 22" fill="none" stroke="#fff" stroke-width="2.1" stroke-linecap="round" stroke-linejoin="round"><path d="M-4.5 -8.2 L4.8 0 L-4.5 8.2"/></svg>
<svg style="left:572px;top:1378.8899999999999px" width="30" height="28" viewBox="0 0 30 28"><defs><linearGradient id="fg" x1="0" y1="0" x2="0" y2="1"><stop offset="0" stop-color="#a5dbfb"/><stop offset="1" stop-color="#79c0f2"/></linearGradient></defs><path d="M0 2.2 Q0 0.6 1.6 0.6 H8.2 Q9.4 0.6 10.2 1.6 L11.4 3 H24.6 Q26 3 26 4.4 V21 Q26 22.4 24.6 22.4 H1.4 Q0 22.4 0 21Z" fill="#6fb4e6"/><path d="M0 6.4 H26 V21 Q26 22.4 24.6 22.4 H1.4 Q0 22.4 0 21Z" fill="url(#fg)"/><circle cx="13" cy="14.3" r="6" fill="#4a90d9"/><circle cx="9.6" cy="14.6" r="0.9" fill="#a5dbfb"/><circle cx="16.4" cy="14.6" r="0.9" fill="#a5dbfb"/><circle cx="10.6" cy="11.8" r="0.9" fill="#a5dbfb"/><circle cx="15.4" cy="11.8" r="0.9" fill="#a5dbfb"/><circle cx="13" cy="10.8" r="0.9" fill="#a5dbfb"/><rect x="11.4" y="18" width="3.2" height="2.6" fill="#8fcdf6"/></svg>
<div class="t" style="top:1390.9899999999998px;font-size:26px;color:#fff;line-height:0;white-space:nowrap;letter-spacing:0.388px;-webkit-text-stroke:0.42px #fff;left:608.2px;">Send to All</div>
<svg style="left:843px;top:1379.3899999999999px" width="16" height="22" viewBox="-8 -11 16 22" fill="none" stroke="#fff" stroke-width="2.1" stroke-linecap="round" stroke-linejoin="round"><path d="M-4.5 -8.2 L4.8 0 L-4.5 8.2"/></svg>
<div style="left:945px;top:1590px;width:330px;height:48px;background:#555;border-radius:10px;"></div>
<svg style="left:958.5px;top:1210.3px" width="30" height="28" viewBox="0 0 30 28"><rect x="0" y="0" width="21" height="24" rx="2" fill="#73777e"/><rect x="9.7" y="2.4" width="1.6" height="19.2" fill="#0c0c0c"/><rect x="7.9" y="8" width="5.2" height="8" rx="0.7" fill="#ececec"/></svg>
<div class="t" style="top:1222.8999999999999px;font-size:26px;color:#fff;line-height:0;white-space:nowrap;letter-spacing:0.255px;-webkit-text-stroke:0.42px #fff;left:992.2px;">Volume</div>
<svg style="left:958.5px;top:1266.33px" width="30" height="28" viewBox="0 0 30 28"><rect x="0" y="0" width="21" height="24" rx="2" fill="#73777e"/><rect x="9.7" y="2.4" width="1.6" height="19.2" fill="#0c0c0c"/><rect x="7.9" y="8" width="5.2" height="8" rx="0.7" fill="#ececec"/></svg>
<div class="t" style="top:1278.9299999999998px;font-size:26px;color:#fff;line-height:0;white-space:nowrap;letter-spacing:0.566px;-webkit-text-stroke:0.42px #fff;left:992.2px;">Mute</div>
<svg style="left:958.5px;top:1322.36px" width="30" height="28" viewBox="0 0 30 28"><rect x="0" y="0" width="21" height="24" rx="2" fill="#73777e"/><rect x="9.7" y="2.4" width="1.6" height="19.2" fill="#0c0c0c"/><rect x="7.9" y="8" width="5.2" height="8" rx="0.7" fill="#ececec"/></svg>
<div class="t" style="top:1334.9599999999998px;font-size:26px;color:#fff;line-height:0;white-space:nowrap;letter-spacing:-1.632px;-webkit-text-stroke:0.42px #fff;left:992.2px;">Pan</div>
<svg style="left:958.5px;top:1378.3899999999999px" width="30" height="28" viewBox="0 0 30 28"><rect x="0" y="0" width="21" height="24" rx="2" fill="#73777e"/><rect x="9.7" y="2.4" width="1.6" height="19.2" fill="#0c0c0c"/><rect x="7.9" y="8" width="5.2" height="8" rx="0.7" fill="#ececec"/></svg>
<div class="t" style="top:1390.9899999999998px;font-size:26px;color:#fff;line-height:0;white-space:nowrap;letter-spacing:0.131px;-webkit-text-stroke:0.42px #fff;left:992.2px;">Expression</div>
<svg style="left:958.5px;top:1434.42px" width="30" height="28" viewBox="0 0 30 28"><rect x="0" y="0" width="21" height="24" rx="2" fill="#73777e"/><rect x="9.7" y="2.4" width="1.6" height="19.2" fill="#0c0c0c"/><rect x="7.9" y="8" width="5.2" height="8" rx="0.7" fill="#ececec"/></svg>
<div class="t" style="top:1447.02px;font-size:26px;color:#fff;line-height:0;white-space:nowrap;letter-spacing:-0.247px;-webkit-text-stroke:0.42px #fff;left:992.2px;">Solo</div>
<svg style="left:956px;top:1490.4499999999998px" width="30" height="28" viewBox="0 0 30 28"><rect x="0" y="0" width="21" height="24" rx="2" fill="#73777e"/><rect x="9.7" y="2.4" width="1.6" height="19.2" fill="#0c0c0c"/><rect x="7.9" y="8" width="5.2" height="8" rx="0.7" fill="#ececec"/><rect x="15.2" y="14.5" width="11" height="9.5" rx="1.5" fill="#e6e6e6"/><path d="M17.6 14.8 V12.6 A3.1 3.1 0 0 1 23.8 12.6 V14.8" fill="none" stroke="#e6e6e6" stroke-width="1.7"/></svg>
<div class="t" style="top:1503.0499999999997px;font-size:26px;color:#fff;line-height:0;white-space:nowrap;letter-spacing:0.259px;-webkit-text-stroke:0.42px #fff;left:992.2px;">Input Level</div>
<svg style="left:956px;top:1546.48px" width="30" height="28" viewBox="0 0 30 28"><rect x="0" y="0" width="21" height="24" rx="2" fill="#73777e"/><rect x="9.7" y="2.4" width="1.6" height="19.2" fill="#0c0c0c"/><rect x="7.9" y="8" width="5.2" height="8" rx="0.7" fill="#ececec"/><rect x="15.2" y="14.5" width="11" height="9.5" rx="1.5" fill="#e6e6e6"/><path d="M17.6 14.8 V12.6 A3.1 3.1 0 0 1 23.8 12.6 V14.8" fill="none" stroke="#e6e6e6" stroke-width="1.7"/></svg>
<div class="t" style="top:1559.08px;font-size:26px;color:#fff;line-height:0;white-space:nowrap;letter-spacing:-0.29px;-webkit-text-stroke:0.42px #fff;left:992.2px;">Level</div>
<svg style="left:955px;top:1601.51px" width="28" height="26" viewBox="0 0 28 26"><rect x="0.5" y="0.5" width="27" height="25" rx="3.5" fill="#3a3a3a" stroke="#2a2a2a" stroke-width="1"/><g stroke="#6ee57a" stroke-width="1.8" stroke-linecap="round"><path d="M3.4 12 V14 M7 9.5 V16.5 M10.3 5.8 V20.2 M14 2.8 V23.2 M17.7 5.8 V20.2 M21 9.5 V16.5 M24.6 12 V14"/></g></svg>
<svg style="left:1246.5px;top:1603.51px" width="16" height="22" viewBox="-8 -11 16 22" fill="none" stroke="#fff" stroke-width="2.1" stroke-linecap="round" stroke-linejoin="round"><path d="M-4.5 -8.2 L4.8 0 L-4.5 8.2"/></svg>
<div class="t" style="top:1615.11px;font-size:26px;color:#fff;line-height:0;white-space:nowrap;letter-spacing:0.301px;-webkit-text-stroke:0.42px #fff;left:992.2px;">Tremolo</div>
<div style="left:1349px;top:1478px;width:358px;height:48px;background:#38609a;border-radius:10px;"></div>
<svg style="left:1362px;top:1211.0px" width="30" height="28" viewBox="0 0 30 28"><rect x="0" y="0" width="21" height="24" rx="2" fill="#73777e"/><rect x="9.7" y="2.4" width="1.6" height="19.2" fill="#0c0c0c"/><rect x="7.9" y="8" width="5.2" height="8" rx="0.7" fill="#ececec"/></svg>
<div class="t" style="top:1223.3px;font-size:26px;color:#fff;line-height:0;white-space:nowrap;letter-spacing:0.147px;-webkit-text-stroke:0.42px #fff;left:1395.9px;">Bypass</div>
<svg style="left:1362px;top:1267.03px" width="30" height="28" viewBox="0 0 30 28"><rect x="0" y="0" width="21" height="24" rx="2" fill="#73777e"/><rect x="9.7" y="2.4" width="1.6" height="19.2" fill="#0c0c0c"/><rect x="7.9" y="8" width="5.2" height="8" rx="0.7" fill="#ececec"/></svg>
<div class="t" style="top:1279.33px;font-size:26px;color:#fff;line-height:0;white-space:nowrap;letter-spacing:0.269px;-webkit-text-stroke:0.42px #fff;left:1395.9px;">Preset name</div>
<svg style="left:1359.5px;top:1323.56px" width="30" height="28" viewBox="0 0 30 28"><defs><linearGradient id="fg" x1="0" y1="0" x2="0" y2="1"><stop offset="0" stop-color="#a5dbfb"/><stop offset="1" stop-color="#79c0f2"/></linearGradient></defs><path d="M0 2.2 Q0 0.6 1.6 0.6 H8.2 Q9.4 0.6 10.2 1.6 L11.4 3 H24.6 Q26 3 26 4.4 V21 Q26 22.4 24.6 22.4 H1.4 Q0 22.4 0 21Z" fill="#6fb4e6"/><path d="M0 6.4 H26 V21 Q26 22.4 24.6 22.4 H1.4 Q0 22.4 0 21Z" fill="url(#fg)"/></svg>
<svg style="left:1679.5px;top:1324.06px" width="16" height="22" viewBox="-8 -11 16 22" fill="none" stroke="#fff" stroke-width="2.1" stroke-linecap="round" stroke-linejoin="round"><path d="M-4.5 -8.2 L4.8 0 L-4.5 8.2"/></svg>
<div class="t" style="top:1335.36px;font-size:26px;color:#fff;line-height:0;white-space:nowrap;letter-spacing:0.81px;-webkit-text-stroke:0.42px #fff;left:1395.9px;">Non-automatable</div>
<svg style="left:1362px;top:1379.09px" width="30" height="28" viewBox="0 0 30 28"><rect x="0" y="0" width="21" height="24" rx="2" fill="#73777e"/><rect x="9.7" y="2.4" width="1.6" height="19.2" fill="#0c0c0c"/><rect x="7.9" y="8" width="5.2" height="8" rx="0.7" fill="#ececec"/></svg>
<div class="t" style="top:1391.3899999999999px;font-size:26px;color:#fff;line-height:0;white-space:nowrap;letter-spacing:0.73px;-webkit-text-stroke:0.42px #fff;left:1395.9px;">Depth</div>
<svg style="left:1362px;top:1435.12px" width="30" height="28" viewBox="0 0 30 28"><rect x="0" y="0" width="21" height="24" rx="2" fill="#73777e"/><rect x="9.7" y="2.4" width="1.6" height="19.2" fill="#0c0c0c"/><rect x="7.9" y="8" width="5.2" height="8" rx="0.7" fill="#ececec"/></svg>
<div class="t" style="top:1447.4199999999998px;font-size:26px;color:#fff;line-height:0;white-space:nowrap;letter-spacing:0.903px;-webkit-text-stroke:0.42px #fff;left:1395.9px;">Offset</div>
<svg style="left:1362px;top:1491.15px" width="30" height="28" viewBox="0 0 30 28"><rect x="0" y="0" width="21" height="24" rx="2" fill="#73777e"/><rect x="9.7" y="2.4" width="1.6" height="19.2" fill="#0c0c0c"/><rect x="7.9" y="8" width="5.2" height="8" rx="0.7" fill="#ececec"/></svg>
<div class="t" style="top:1503.45px;font-size:26px;color:#fff;line-height:0;white-space:nowrap;letter-spacing:-0.474px;-webkit-text-stroke:0.42px #fff;left:1395.9px;">Rate</div>
<svg style="left:1362px;top:1547.18px" width="30" height="28" viewBox="0 0 30 28"><rect x="0" y="0" width="21" height="24" rx="2" fill="#73777e"/><rect x="9.7" y="2.4" width="1.6" height="19.2" fill="#0c0c0c"/><rect x="7.9" y="8" width="5.2" height="8" rx="0.7" fill="#ececec"/></svg>
<div class="t" style="top:1559.48px;font-size:26px;color:#fff;line-height:0;white-space:nowrap;letter-spacing:0.599px;-webkit-text-stroke:0.42px #fff;left:1395.9px;">Smoothing</div>
<svg style="left:1362px;top:1603.21px" width="30" height="28" viewBox="0 0 30 28"><rect x="0" y="0" width="21" height="24" rx="2" fill="#73777e"/><rect x="9.7" y="2.4" width="1.6" height="19.2" fill="#0c0c0c"/><rect x="7.9" y="8" width="5.2" height="8" rx="0.7" fill="#ececec"/></svg>
<div class="t" style="top:1615.51px;font-size:26px;color:#fff;line-height:0;white-space:nowrap;letter-spacing:0.445px;-webkit-text-stroke:0.42px #fff;left:1395.9px;">Stereophase</div>
<svg style="left:1362px;top:1659.24px" width="30" height="28" viewBox="0 0 30 28"><rect x="0" y="0" width="21" height="24" rx="2" fill="#73777e"/><rect x="9.7" y="2.4" width="1.6" height="19.2" fill="#0c0c0c"/><rect x="7.9" y="8" width="5.2" height="8" rx="0.7" fill="#ececec"/></svg>
<div class="t" style="top:1671.54px;font-size:26px;color:#fff;line-height:0;white-space:nowrap;letter-spacing:0.699px;-webkit-text-stroke:0.42px #fff;left:1395.9px;">Symmetry</div>
<div style="left:1802px;top:126px;width:348px;height:1622px;background:#575757;"></div>
<div style="left:1986px;top:126px;width:157px;height:1622px;background:#585858;"></div>
<div style="left:2142px;top:126px;width:8px;height:1622px;background:#5b5b5b;"></div>
<div style="left:2142px;top:126px;width:1px;height:1592px;background:#525252;"></div>
<div style="left:1984px;top:126px;width:2px;height:1592px;background:#0a0a0a;"></div>
<div style="left:1802px;top:1718px;width:348px;height:30px;background:#383838;"></div>
<div style="left:1802px;top:1717px;width:348px;height:1px;background:#2e2e2e;"></div>
<div class="t" style="top:822px;font-size:22px;color:#c9c9c9;line-height:0;white-space:nowrap;letter-spacing:0.892px;-webkit-text-stroke:0.42px #c9c9c9;left:971.692px;width:1000px;text-align:right;">Input</div>
<div class="t" style="top:874px;font-size:22px;color:#c9c9c9;line-height:0;white-space:nowrap;letter-spacing:0.258px;-webkit-text-stroke:0.42px #c9c9c9;left:971.058px;width:1000px;text-align:right;">Audio FX</div>
<div class="t" style="top:942.2px;font-size:22px;color:#c9c9c9;line-height:0;white-space:nowrap;letter-spacing:0.529px;-webkit-text-stroke:0.42px #c9c9c9;left:971.329px;width:1000px;text-align:right;">Sends</div>
<div class="t" style="top:994.3px;font-size:22px;color:#c9c9c9;line-height:0;white-space:nowrap;letter-spacing:1.111px;-webkit-text-stroke:0.42px #c9c9c9;left:971.911px;width:1000px;text-align:right;">Output</div>
<div class="t" style="top:1134.7px;font-size:22.3px;color:#c9c9c9;line-height:0;white-space:nowrap;letter-spacing:-1.04px;-webkit-text-stroke:0.42px #c9c9c9;left:969.3600000000001px;width:1000px;text-align:right;">Pan</div>
<div class="t" style="top:1202.6px;font-size:22.3px;color:#c9c9c9;line-height:0;white-space:nowrap;letter-spacing:0.123px;-webkit-text-stroke:0.42px #c9c9c9;left:970.5230000000001px;width:1000px;text-align:right;">dB</div>
<div style="left:1996px;top:808px;width:134px;height:32px;background:#6b6b6b;border-radius:7px;box-shadow:0 1px 2px rgba(0,0,0,.45), inset 0 1px 0 rgba(255,255,255,.07);"></div>
<div style="left:2031px;top:809px;width:1px;height:30px;background:#555;"></div>
<svg style="left:2004px;top:815px" width="20" height="20" viewBox="-10 -10 20 20"><circle r="7" fill="none" stroke="#fff" stroke-width="1.8"/></svg>
<div class="t" style="top:825px;font-size:21.2px;color:#fff;line-height:0;white-space:nowrap;letter-spacing:0.678px;-webkit-text-stroke:0.42px #fff;left:1581.339px;width:1000px;text-align:center;">Input 1</div>
<div style="left:1995.5px;top:880px;width:135px;height:28.5px;background:#535353;border-radius:8px;"></div>
<div style="left:1996px;top:860px;width:134px;height:32px;background:#3b6eb6;border-radius:7px;box-shadow:0 1px 2px rgba(0,0,0,.45), inset 0 1px 0 rgba(255,255,255,.07);"></div>
<div class="t" style="top:877px;font-size:21.2px;color:#fff;line-height:0;white-space:nowrap;letter-spacing:0.972px;-webkit-text-stroke:0.42px #fff;left:1564.486px;width:1000px;text-align:center;">Tremolo</div>
<div style="left:1995.3px;top:927.6px;width:97.6px;height:32.8px;background:#535353;border-radius:8px;"></div>
<div style="left:2100.3px;top:928.3px;width:31.4px;height:31.4px;background:#535353;border-radius:50%;"></div>
<div style="left:1996px;top:980.2px;width:134px;height:32px;background:#6a6a6a;border-radius:7px;box-shadow:0 1px 2px rgba(0,0,0,.45), inset 0 1px 0 rgba(255,255,255,.07);"></div>
<div class="t" style="top:996.3px;font-size:21.2px;color:#fff;line-height:0;white-space:nowrap;letter-spacing:1.247px;-webkit-text-stroke:0.42px #fff;left:1563.0235px;width:1000px;text-align:center;">Output 1-2</div>
<svg style="left:2034px;top:1034px" width="60" height="44" viewBox="0 0 60 44">
<defs><radialGradient id="wv" cx=".5" cy=".5" r=".7"><stop offset="0" stop-color="#34455c"/><stop offset="1" stop-color="#263244"/></radialGradient></defs>
<rect x="0.5" y="0.5" width="59" height="43" rx="4" fill="url(#wv)" stroke="#20262f"/>
<g stroke="#5fb4ff" stroke-width="1.9" stroke-linecap="round">
<path d="M8 20.5 V23.5 M11.7 18 V26 M15.4 16 V28 M19.1 18.5 V25.5 M22.8 13 V31 M26.5 16.5 V27.5 M30.2 7.5 V36 M33.9 12 V32 M37.6 17 V27 M41.3 13.5 V30.5 M45 17 V27 M48.7 19.5 V24.5 M52.4 21 V23"/></g></svg>
<svg style="left:2020px;top:1096px" width="86" height="86" viewBox="-43 -43 86 86">
<defs><filter id="pks" x="-40%" y="-40%" width="180%" height="180%"><feGaussianBlur stdDeviation="3"/></filter><linearGradient id="pk" x1="0" y1="0" x2="0" y2="1"><stop offset="0" stop-color="#8f8f8f"/><stop offset="1" stop-color="#868686"/></linearGradient></defs>
<path d="M-15.3 28.3 A32.2 32.2 0 1 1 15.3 28.3" fill="none" stroke="#3b3b3b" stroke-width="7.6"/>
<circle cx="0" cy="6" r="25" fill="#000" opacity=".3" filter="url(#pks)"/>
<circle r="28" fill="url(#pk)"/>
<path d="M-27.3 -4 A27.6 27.6 0 0 1 27.3 -4" fill="none" stroke="#b5b5b5" stroke-width="1.2"/>
<path d="M0.3 -36 V-28.4" stroke="#4fb75a" stroke-width="1.2"/>
<path d="M0 -24.5 V-18.5" stroke="#111" stroke-width="2.4"/>
</svg>
<div style="left:1994px;top:1186px;width:66px;height:36px;background:#3a3a3a;border-radius:2px;"></div>
<div style="left:2066px;top:1186px;width:66px;height:36px;background:#3a3a3a;border-radius:2px;"></div>
<div class="t" style="top:1203.8px;font-size:27.5px;color:#fff;line-height:0;white-space:nowrap;letter-spacing:-0.163px;left:1525.2185px;width:1000px;text-align:center;">-∞</div>
<div style="left:1962px;top:1265.9px;width:22px;height:2.0px;background:#a6a6a6;"></div>
<div style="left:2002px;top:1265.9px;width:22px;height:2.0px;background:#a6a6a6;"></div>
<div class="t" style="top:1266.9px;font-size:15.5px;color:#b5b5b5;line-height:0;white-space:nowrap;left:956.3px;width:1000px;text-align:right;">6</div>
<div style="left:1962px;top:1299.8px;width:22px;height:2.0px;background:#a6a6a6;"></div>
<div style="left:2002px;top:1299.8px;width:22px;height:2.0px;background:#a6a6a6;"></div>
<div class="t" style="top:1300.8px;font-size:15.5px;color:#b5b5b5;line-height:0;white-space:nowrap;left:956.3px;width:1000px;text-align:right;">3</div>
<div style="left:1962px;top:1333.8999999999999px;width:22px;height:2.4px;background:#fff;"></div>
<div style="left:2002px;top:1333.8999999999999px;width:22px;height:2.4px;background:#fff;"></div>
<div class="t" style="top:1335.1px;font-size:15.5px;color:#b5b5b5;line-height:0;white-space:nowrap;left:956.3px;width:1000px;text-align:right;">0</div>
<div style="left:1962px;top:1368.0px;width:22px;height:2.0px;background:#a6a6a6;"></div>
<div style="left:2002px;top:1368.0px;width:22px;height:2.0px;background:#a6a6a6;"></div>
<div class="t" style="top:1369.0px;font-size:15.5px;color:#b5b5b5;line-height:0;white-space:nowrap;left:956.3px;width:1000px;text-align:right;">3</div>
<div style="left:1962px;top:1403.9px;width:22px;height:2.0px;background:#a6a6a6;"></div>
<div style="left:2002px;top:1403.9px;width:22px;height:2.0px;background:#a6a6a6;"></div>
<div class="t" style="top:1404.9px;font-size:15.5px;color:#b5b5b5;line-height:0;white-space:nowrap;left:956.3px;width:1000px;text-align:right;">6</div>
<div style="left:1962px;top:1425.7px;width:22px;height:2.0px;background:#a6a6a6;"></div>
<div style="left:2002px;top:1425.7px;width:22px;height:2.0px;background:#a6a6a6;"></div>
<div class="t" style="top:1426.7px;font-size:15.5px;color:#b5b5b5;line-height:0;white-space:nowrap;letter-spacing:-2.041px;left:954.5589999999999px;width:1000px;text-align:right;">10</div>
<div style="left:1962px;top:1454.1px;width:22px;height:2.0px;background:#a6a6a6;"></div>
<div style="left:2002px;top:1454.1px;width:22px;height:2.0px;background:#a6a6a6;"></div>
<div class="t" style="top:1455.1px;font-size:15.5px;color:#b5b5b5;line-height:0;white-space:nowrap;letter-spacing:-2.041px;left:954.5589999999999px;width:1000px;text-align:right;">15</div>
<div style="left:1962px;top:1476.1px;width:22px;height:2.0px;background:#a6a6a6;"></div>
<div style="left:2002px;top:1476.1px;width:22px;height:2.0px;background:#a6a6a6;"></div>
<div class="t" style="top:1477.1px;font-size:15.5px;color:#b5b5b5;line-height:0;white-space:nowrap;letter-spacing:-2.041px;left:954.5589999999999px;width:1000px;text-align:right;">20</div>
<div style="left:1962px;top:1499.5px;width:22px;height:2.0px;background:#a6a6a6;"></div>
<div style="left:2002px;top:1499.5px;width:22px;height:2.0px;background:#a6a6a6;"></div>
<div class="t" style="top:1500.5px;font-size:15.5px;color:#b5b5b5;line-height:0;white-space:nowrap;letter-spacing:-2.041px;left:954.5589999999999px;width:1000px;text-align:right;">30</div>
<div style="left:1962px;top:1512.1px;width:22px;height:2.0px;background:#a6a6a6;"></div>
<div style="left:2002px;top:1512.1px;width:22px;height:2.0px;background:#a6a6a6;"></div>
<div class="t" style="top:1513.1px;font-size:15.5px;color:#b5b5b5;line-height:0;white-space:nowrap;letter-spacing:-2.041px;left:954.5589999999999px;width:1000px;text-align:right;">40</div>
<div style="left:1962px;top:1533.7px;width:22px;height:2.0px;background:#a6a6a6;"></div>
<div style="left:2002px;top:1533.7px;width:22px;height:2.0px;background:#a6a6a6;"></div>
<div class="t" style="top:1533.7px;font-size:22px;color:#b5b5b5;line-height:0;white-space:nowrap;left:958px;width:1000px;text-align:right;">∞</div>
<div style="left:1976px;top:1275.95px;width:8px;height:1.9px;background:#8f8f8f;"></div>
<div style="left:2016px;top:1275.95px;width:8px;height:1.9px;background:#8f8f8f;"></div>
<div style="left:1976px;top:1287.85px;width:8px;height:1.9px;background:#8f8f8f;"></div>
<div style="left:2016px;top:1287.85px;width:8px;height:1.9px;background:#8f8f8f;"></div>
<div style="left:1976px;top:1311.85px;width:8px;height:1.9px;background:#8f8f8f;"></div>
<div style="left:2016px;top:1311.85px;width:8px;height:1.9px;background:#8f8f8f;"></div>
<div style="left:1976px;top:1322.05px;width:8px;height:1.9px;background:#8f8f8f;"></div>
<div style="left:2016px;top:1322.05px;width:8px;height:1.9px;background:#8f8f8f;"></div>
<div style="left:1976px;top:1346.05px;width:8px;height:1.9px;background:#8f8f8f;"></div>
<div style="left:2016px;top:1346.05px;width:8px;height:1.9px;background:#8f8f8f;"></div>
<div style="left:1976px;top:1358.05px;width:8px;height:1.9px;background:#8f8f8f;"></div>
<div style="left:2016px;top:1358.05px;width:8px;height:1.9px;background:#8f8f8f;"></div>
<div style="left:1976px;top:1379.95px;width:8px;height:1.9px;background:#8f8f8f;"></div>
<div style="left:2016px;top:1379.95px;width:8px;height:1.9px;background:#8f8f8f;"></div>
<div style="left:1976px;top:1391.95px;width:8px;height:1.9px;background:#8f8f8f;"></div>
<div style="left:2016px;top:1391.95px;width:8px;height:1.9px;background:#8f8f8f;"></div>
<div style="left:1976px;top:1409.5000000000002px;width:8px;height:1.7px;background:#8f8f8f;"></div>
<div style="left:2016px;top:1409.5000000000002px;width:8px;height:1.7px;background:#8f8f8f;"></div>
<div style="left:1976px;top:1414.9500000000003px;width:8px;height:1.7px;background:#8f8f8f;"></div>
<div style="left:2016px;top:1414.9500000000003px;width:8px;height:1.7px;background:#8f8f8f;"></div>
<div style="left:1976px;top:1420.4px;width:8px;height:1.7px;background:#8f8f8f;"></div>
<div style="left:2016px;top:1420.4px;width:8px;height:1.7px;background:#8f8f8f;"></div>
<div style="left:1976px;top:1431.5300000000002px;width:8px;height:1.7px;background:#8f8f8f;"></div>
<div style="left:2016px;top:1431.5300000000002px;width:8px;height:1.7px;background:#8f8f8f;"></div>
<div style="left:1976px;top:1437.21px;width:8px;height:1.7px;background:#8f8f8f;"></div>
<div style="left:2016px;top:1437.21px;width:8px;height:1.7px;background:#8f8f8f;"></div>
<div style="left:1976px;top:1442.89px;width:8px;height:1.7px;background:#8f8f8f;"></div>
<div style="left:2016px;top:1442.89px;width:8px;height:1.7px;background:#8f8f8f;"></div>
<div style="left:1976px;top:1448.57px;width:8px;height:1.7px;background:#8f8f8f;"></div>
<div style="left:2016px;top:1448.57px;width:8px;height:1.7px;background:#8f8f8f;"></div>
<div style="left:1976px;top:1458.65px;width:8px;height:1.7px;background:#8f8f8f;"></div>
<div style="left:2016px;top:1458.65px;width:8px;height:1.7px;background:#8f8f8f;"></div>
<div style="left:1976px;top:1463.05px;width:8px;height:1.7px;background:#8f8f8f;"></div>
<div style="left:2016px;top:1463.05px;width:8px;height:1.7px;background:#8f8f8f;"></div>
<div style="left:1976px;top:1467.45px;width:8px;height:1.7px;background:#8f8f8f;"></div>
<div style="left:2016px;top:1467.45px;width:8px;height:1.7px;background:#8f8f8f;"></div>
<div style="left:1976px;top:1471.85px;width:8px;height:1.7px;background:#8f8f8f;"></div>
<div style="left:2016px;top:1471.85px;width:8px;height:1.7px;background:#8f8f8f;"></div>
<div style="left:1976px;top:1480.93px;width:8px;height:1.7px;background:#8f8f8f;"></div>
<div style="left:2016px;top:1480.93px;width:8px;height:1.7px;background:#8f8f8f;"></div>
<div style="left:1976px;top:1485.6100000000001px;width:8px;height:1.7px;background:#8f8f8f;"></div>
<div style="left:2016px;top:1485.6100000000001px;width:8px;height:1.7px;background:#8f8f8f;"></div>
<div style="left:1976px;top:1490.29px;width:8px;height:1.7px;background:#8f8f8f;"></div>
<div style="left:2016px;top:1490.29px;width:8px;height:1.7px;background:#8f8f8f;"></div>
<div style="left:1976px;top:1494.97px;width:8px;height:1.7px;background:#8f8f8f;"></div>
<div style="left:2016px;top:1494.97px;width:8px;height:1.7px;background:#8f8f8f;"></div>
<div style="left:1976px;top:1505.95px;width:8px;height:1.7px;background:#8f8f8f;"></div>
<div style="left:2016px;top:1505.95px;width:8px;height:1.7px;background:#8f8f8f;"></div>
<div style="left:1976px;top:1519.45px;width:8px;height:1.7px;background:#8f8f8f;"></div>
<div style="left:2016px;top:1519.45px;width:8px;height:1.7px;background:#8f8f8f;"></div>
<div style="left:1976px;top:1526.65px;width:8px;height:1.7px;background:#8f8f8f;"></div>
<div style="left:2016px;top:1526.65px;width:8px;height:1.7px;background:#8f8f8f;"></div>
<div style="left:2026.2px;top:1264px;width:3.7px;height:240px;background:#3b3b3b;border-radius:2px;"></div>
<div style="left:2084px;top:1262px;width:24px;height:278px;background:#393939;border-radius:1.5px;"></div>
<div class="t" style="top:1266.9px;font-size:15.5px;color:#b5b5b5;line-height:0;white-space:nowrap;left:1074.3000000000002px;width:1000px;text-align:right;">0</div>
<div style="left:2078px;top:1265.9px;width:6px;height:2px;background:#a8a8a8;"></div>
<div class="t" style="top:1285.4px;font-size:15.5px;color:#b5b5b5;line-height:0;white-space:nowrap;left:1074.3000000000002px;width:1000px;text-align:right;">3</div>
<div style="left:2078px;top:1284.4px;width:6px;height:2px;background:#a8a8a8;"></div>
<div class="t" style="top:1302.9px;font-size:15.5px;color:#b5b5b5;line-height:0;white-space:nowrap;left:1074.3000000000002px;width:1000px;text-align:right;">6</div>
<div style="left:2078px;top:1301.9px;width:6px;height:2px;background:#a8a8a8;"></div>
<div class="t" style="top:1321.1px;font-size:15.5px;color:#b5b5b5;line-height:0;white-space:nowrap;left:1074.3000000000002px;width:1000px;text-align:right;">9</div>
<div style="left:2078px;top:1320.1px;width:6px;height:2px;background:#a8a8a8;"></div>
<div class="t" style="top:1339.5px;font-size:15.5px;color:#b5b5b5;line-height:0;white-space:nowrap;letter-spacing:-1.641px;left:1072.659px;width:1000px;text-align:right;">12</div>
<div style="left:2078px;top:1338.5px;width:6px;height:2px;background:#a8a8a8;"></div>
<div class="t" style="top:1357.1px;font-size:15.5px;color:#b5b5b5;line-height:0;white-space:nowrap;letter-spacing:-1.641px;left:1072.659px;width:1000px;text-align:right;">15</div>
<div style="left:2078px;top:1356.1px;width:6px;height:2px;background:#a8a8a8;"></div>
<div class="t" style="top:1375.2px;font-size:15.5px;color:#b5b5b5;line-height:0;white-space:nowrap;letter-spacing:-1.641px;left:1072.659px;width:1000px;text-align:right;">18</div>
<div style="left:2078px;top:1374.2px;width:6px;height:2px;background:#a8a8a8;"></div>
<div class="t" style="top:1393.1px;font-size:15.5px;color:#b5b5b5;line-height:0;white-space:nowrap;letter-spacing:-1.641px;left:1072.659px;width:1000px;text-align:right;">21</div>
<div style="left:2078px;top:1392.1px;width:6px;height:2px;background:#a8a8a8;"></div>
<div class="t" style="top:1411.2px;font-size:15.5px;color:#b5b5b5;line-height:0;white-space:nowrap;letter-spacing:-1.641px;left:1072.659px;width:1000px;text-align:right;">24</div>
<div style="left:2078px;top:1410.2px;width:6px;height:2px;background:#a8a8a8;"></div>
<div class="t" style="top:1434.6px;font-size:15.5px;color:#b5b5b5;line-height:0;white-space:nowrap;letter-spacing:-1.641px;left:1072.659px;width:1000px;text-align:right;">30</div>
<div style="left:2078px;top:1433.6px;width:6px;height:2px;background:#a8a8a8;"></div>
<div class="t" style="top:1455.1px;font-size:15.5px;color:#b5b5b5;line-height:0;white-space:nowrap;letter-spacing:-1.641px;left:1072.659px;width:1000px;text-align:right;">35</div>
<div style="left:2078px;top:1454.1px;width:6px;height:2px;background:#a8a8a8;"></div>
<div class="t" style="top:1475px;font-size:15.5px;color:#b5b5b5;line-height:0;white-space:nowrap;letter-spacing:-1.641px;left:1072.659px;width:1000px;text-align:right;">40</div>
<div style="left:2078px;top:1474px;width:6px;height:2px;background:#a8a8a8;"></div>
<div class="t" style="top:1495.2px;font-size:15.5px;color:#b5b5b5;line-height:0;white-space:nowrap;letter-spacing:-1.641px;left:1072.659px;width:1000px;text-align:right;">45</div>
<div style="left:2078px;top:1494.2px;width:6px;height:2px;background:#a8a8a8;"></div>
<div class="t" style="top:1515.1px;font-size:15.5px;color:#b5b5b5;line-height:0;white-space:nowrap;letter-spacing:-1.641px;left:1072.659px;width:1000px;text-align:right;">50</div>
<div style="left:2078px;top:1514.1px;width:6px;height:2px;background:#a8a8a8;"></div>
<div class="t" style="top:1535px;font-size:15.5px;color:#b5b5b5;line-height:0;white-space:nowrap;letter-spacing:-1.641px;left:1072.659px;width:1000px;text-align:right;">60</div>
<div style="left:2078px;top:1534px;width:6px;height:2px;background:#a8a8a8;"></div>
<div style="left:2082px;top:1272px;width:2px;height:139.6px;background:repeating-linear-gradient(#c6c6c6 0 1.8px,transparent 1.8px 6.02px);"></div>
<div style="left:2082px;top:1415.4px;width:2px;height:119.6px;background:repeating-linear-gradient(#c6c6c6 0 1.8px,transparent 1.8px 4.0px);"></div>
<svg style="left:2004.9px;top:1495.6px" width="46.4" height="84.6" viewBox="-6 -4 46.4 84.6"><defs><linearGradient id="fct" x1="0" y1="0" x2="0" y2="1"><stop offset="0" stop-color="#a4a7a7"/><stop offset="1" stop-color="#d3d7d7"/></linearGradient><linearGradient id="fcb" x1="0" y1="0" x2="0" y2="1"><stop offset="0" stop-color="#8c8f8f"/><stop offset=".75" stop-color="#a6a9a9"/><stop offset="1" stop-color="#8a8d8d"/></linearGradient><clipPath id="fcc"><rect x="0" y="0" width="34.4" height="70.6" rx="2.6"/></clipPath><filter id="fcs" x="-30%" y="-30%" width="160%" height="160%"><feGaussianBlur stdDeviation="2.2"/></filter></defs><rect x="0.5" y="4" width="33.4" height="70.6" rx="3" fill="#000" opacity=".45" filter="url(#fcs)"/><g clip-path="url(#fcc)"><rect x="0" y="0" width="34.4" height="10.4" fill="url(#fct)"/><rect x="0" y="10.4" width="34.4" height="4.60" fill="#8a8d8d"/><rect x="0" y="14.9" width="34.4" height="5.20" fill="#8e9191"/><rect x="0" y="14.5" width="34.4" height="0.8" fill="#7d8080"/><rect x="0" y="20.0" width="34.4" height="5.20" fill="#939696"/><rect x="0" y="19.6" width="34.4" height="0.8" fill="#7d8080"/><rect x="0" y="25.1" width="34.4" height="5.10" fill="#999c9c"/><rect x="0" y="24.700000000000003" width="34.4" height="0.8" fill="#7d8080"/><rect x="0" y="30.1" width="34.4" height="4.80" fill="#a0a3a3"/><rect x="0" y="29.700000000000003" width="34.4" height="0.8" fill="#7d8080"/><rect x="0" y="34.7" width="34.4" height="1.5" fill="#2b2b2b"/><rect x="0" y="36.2" width="34.4" height="4.60" fill="#b0b4b4"/><rect x="0" y="40.7" width="34.4" height="5.20" fill="#b8bcbc"/><rect x="0" y="40.300000000000004" width="34.4" height="0.8" fill="#a3a7a7"/><rect x="0" y="45.8" width="34.4" height="5.20" fill="#bec2c4"/><rect x="0" y="45.4" width="34.4" height="0.8" fill="#a3a7a7"/><rect x="0" y="50.9" width="34.4" height="5.10" fill="#c4c8ca"/><rect x="0" y="50.5" width="34.4" height="0.8" fill="#a3a7a7"/><rect x="0" y="55.9" width="34.4" height="4.80" fill="#c9cdcf"/><rect x="0" y="55.5" width="34.4" height="0.8" fill="#a3a7a7"/><rect x="0" y="60.6" width="34.4" height="10" fill="url(#fcb)"/></g><rect x="0.4" y="0.4" width="33.6" height="69.8" rx="2.4" fill="none" stroke="#555" stroke-opacity=".55" stroke-width="0.8"/></svg>
<div style="left:1996px;top:1590px;width:62px;height:32px;background:#6b6b6b;border-radius:7px;box-shadow:0 1px 2px rgba(0,0,0,.45), inset 0 1px 0 rgba(255,255,255,.07);"></div>
<div style="left:2067.5px;top:1590px;width:62.5px;height:32px;background:#6b6b6b;border-radius:7px;box-shadow:0 1px 2px rgba(0,0,0,.45), inset 0 1px 0 rgba(255,255,255,.07);"></div>
<div class="t" style="top:1607px;font-size:24.5px;color:#fff;line-height:0;white-space:nowrap;font-weight:700;left:1526.9px;width:1000px;text-align:center;">M</div>
<div class="t" style="top:1607px;font-size:24.5px;color:#fff;line-height:0;white-space:nowrap;font-weight:700;left:1598.3000000000002px;width:1000px;text-align:center;">S</div>
<div class="t" style="top:1652.6px;font-size:22px;color:#1c1c1c;line-height:0;white-space:nowrap;letter-spacing:0.496px;-webkit-text-stroke:0.2px #1c1c1c;left:1563.9479999999999px;width:1000px;text-align:center;">0.0 ms</div>
<div style="left:1986px;top:1668px;width:156px;height:2px;background:#505050;"></div>
<div style="left:1986px;top:1670px;width:156px;height:48px;background:#5c5840;"></div>
<div class="t" style="top:1692.3px;font-size:22px;color:#fff;line-height:0;white-space:nowrap;letter-spacing:-0.003px;-webkit-text-stroke:0.3px #fff;left:1564.9985px;width:1000px;text-align:center;">Audio 1</div>
<div style="left:1330.2px;top:43.1px;width:900px;height:749.6px;background:#1c1c1c;border-radius:18px;box-shadow:0 0 0 1.6px rgba(178,178,178,.5),0 0 0 2.2px rgba(0,0,0,.28),0 10px 28px rgba(0,0,0,.26);"></div>
<div style="left:1343.9px;top:58px;width:24.2px;height:24.2px;background:#d4d4d4;border-radius:50%;"></div>
<div class="t" style="top:71.5px;font-size:27.5px;color:#8f8f8f;line-height:0;white-space:nowrap;font-weight:700;letter-spacing:-0.77px;left:1806.3px;">Audio [Audio 1]</div>
<div style="left:1362.3px;top:116.1px;width:75.6px;height:75.6px;background:#2d4b73;border-radius:50%;"></div>
<svg style="left:1361.6px;top:115.5px" width="77" height="77" viewBox="-38.5 -38.5 77 77" fill="none" stroke="#8f949b" stroke-width="3.7" stroke-linecap="round"><path d="M0 -21.3 V-1.5"/><path d="M-11.3 -16.55 A20.2 20.2 0 1 0 11.3 -16.55"/></svg>
<div style="left:1464px;top:104px;width:540px;height:40px;background:#2d2d2d;border-radius:9px;border:1px solid #3c3c3c;box-shadow:0 1px 2px rgba(0,0,0,.5);"></div>
<div class="t" style="top:123px;font-size:26px;color:#fff;line-height:0;white-space:nowrap;letter-spacing:0.481px;-webkit-text-stroke:0.42px #fff;left:1478.6px;">Default Preset</div>
<svg style="left:1977.2px;top:115.6px" width="20" height="18" viewBox="-10 -9 20 18" fill="none" stroke="#a2a2a2" stroke-width="2.4" stroke-linecap="round" stroke-linejoin="round"><path d="M-6.2 -3 L0 3.6 L6.2 -3"/></svg>
<div style="left:1464px;top:164px;width:134px;height:40px;background:#2d2d2d;border-radius:9px;border:1px solid #3c3c3c;box-shadow:0 1px 2px rgba(0,0,0,.5);"></div>
<div style="left:1531px;top:165px;width:1px;height:38px;background:#3e3e3e;"></div>
<svg style="left:1464px;top:164px" width="134" height="40" viewBox="0 0 134 40" fill="none" stroke="#fff" stroke-width="2.2" stroke-linecap="round" stroke-linejoin="round"><path d="M35 11.5 L25 21 L35 30.5"/><path d="M96 11.5 L106 21 L96 30.5"/></svg>
<div style="left:1618px;top:164px;width:136px;height:40px;background:#3b6eb6;border-radius:9px;box-shadow:0 1px 2px rgba(0,0,0,.5);"></div>
<div class="t" style="top:183px;font-size:26px;color:#fff;line-height:0;white-space:nowrap;letter-spacing:0.327px;-webkit-text-stroke:0.42px #fff;left:1185.6635px;width:1000px;text-align:center;">Compare</div>
<div style="left:1758px;top:164px;width:228px;height:40px;background:#2d2d2d;border-radius:9px;border:1px solid #3c3c3c;box-shadow:0 1px 2px rgba(0,0,0,.5);"></div>
<div style="left:1872px;top:165px;width:113px;height:38px;background:#272727;border-radius:0 8px 8px 0;"></div>
<div class="t" style="top:183px;font-size:26px;color:#fff;line-height:0;white-space:nowrap;letter-spacing:0.414px;-webkit-text-stroke:0.42px #fff;left:1314.6070000000002px;width:1000px;text-align:center;">Undo</div>
<div class="t" style="top:183px;font-size:26px;color:#8a8a8a;line-height:0;white-space:nowrap;letter-spacing:-0.619px;-webkit-text-stroke:0.42px #8a8a8a;left:1428.2904999999998px;width:1000px;text-align:center;">Redo</div>
<div style="left:1332px;top:222px;width:450px;height:502px;background:#2a3a50;background:linear-gradient(#2f415a,#2b3b53 45%,#212d3f 100%);"></div>
<div style="left:1782px;top:222px;width:368px;height:502px;background:#141a24;background:linear-gradient(to right,rgba(9,12,17,.62) 0,rgba(9,12,17,.25) 30px,rgba(9,12,17,0) 75px),linear-gradient(to bottom,rgba(9,12,17,.5) 0,rgba(9,12,17,0) 45px),linear-gradient(to top,rgba(9,12,17,.62) 0,rgba(9,12,17,.2) 45px,rgba(9,12,17,0) 100px),#151b25;"></div>
<div style="left:1360.5px;top:308px;width:53.5px;height:40.5px;background:rgba(255,255,255,.052);border-radius:6px;box-shadow:0 1px 2px rgba(0,0,0,.2);"></div>
<svg style="left:1374px;top:314px" width="28" height="30" viewBox="0 0 28 30"><ellipse cx="8.5" cy="22.5" rx="6" ry="4.6" transform="rotate(-20 8.5 22.5)" fill="#b8c0cc"/><path d="M13.6 21 V3.2 L22.5 12.5" fill="none" stroke="#b8c0cc" stroke-width="1.8" stroke-linejoin="miter"/></svg>
<div class="t" style="top:316px;font-size:22px;color:#8595a9;line-height:0;white-space:nowrap;letter-spacing:-0.491px;left:987.5545px;width:1000px;text-align:center;">Rate</div>
<div class="t" style="top:316px;font-size:22px;color:#8595a9;line-height:0;white-space:nowrap;letter-spacing:0.748px;left:1173.874px;width:1000px;text-align:center;">Depth</div>
<div class="t" style="top:348px;font-size:29px;color:#a9f5b3;line-height:0;white-space:nowrap;letter-spacing:0.3px;left:985.15px;width:1000px;text-align:center;">0.45<span style="font-size:23px"> Hz</span></div>
<div class="t" style="top:348px;font-size:29px;color:#a9f5b3;line-height:0;white-space:nowrap;letter-spacing:0.3px;left:1172.15px;width:1000px;text-align:center;">100<span style="font-size:23px"> %</span></div>
<svg style="left:1332px;top:222px" width="450" height="502" viewBox="1332 222 450 502"><defs><linearGradient id="kb" x1="0" y1="0" x2="0" y2="1"><stop offset="0" stop-color="#414e61"/><stop offset="1" stop-color="#364356"/></linearGradient></defs><circle cx="1486.3" cy="432.5" r="49" fill="#263242" opacity=".8"/><circle cx="1486.3" cy="431" r="48" fill="url(#kb)"/><path d="M1461.45 474.04 A49.7 49.7 0 1 1 1511.15 474.04" fill="none" stroke="#06080b" stroke-width="3"/><path d="M1487.67 378.72 A52.3 52.3 0 0 1 1535.13 412.26" fill="none" stroke="#a9f5b3" stroke-width="7.6"/><line x1="1486.3" y1="431" x2="1531.89" y2="413.04" stroke="#a9f5b3" stroke-width="1.8"/><circle cx="1672" cy="432.5" r="49" fill="#263242" opacity=".8"/><circle cx="1672" cy="431" r="48" fill="url(#kb)"/><path d="M1645.90 476.21 A52.2 52.2 0 1 1 1698.10 476.21" fill="none" stroke="#a9f5b3" stroke-width="7.8"/><line x1="1672" y1="433" x2="1697.00" y2="474.30" stroke="#a9f5b3" stroke-width="1.8"/></svg>
<div class="t" style="top:573px;font-size:22px;color:#8595a9;line-height:0;white-space:nowrap;letter-spacing:0.527px;left:1408.4px;">Smoothing</div>
<div class="t" style="top:568.5px;font-size:29px;color:#a9f5b3;line-height:0;white-space:nowrap;letter-spacing:0.3px;left:706.3px;width:1000px;text-align:right;">14<span style="font-size:23px"> %</span></div>
<div style="left:1410px;top:607px;width:295.5px;height:3px;background:#06080b;"></div>
<div style="left:1410px;top:605px;width:43px;height:7px;background:#a9f5b3;"></div>
<div style="left:1445px;top:586px;width:14px;height:45px;background:rgba(150,165,185,.28);"></div>
<div style="left:1451.6px;top:592px;width:1.7px;height:33px;background:#a9f5b3;"></div>
<div class="t" style="top:246.5px;font-size:22px;color:#56646f;line-height:0;white-space:nowrap;letter-spacing:0.65px;left:1813.4px;">Offset:</div>
<div class="t" style="top:248px;font-size:24px;color:#a9f5b3;line-height:0;white-space:nowrap;letter-spacing:-1.307px;left:1895.8px;">0 °</div>
<svg style="left:1782px;top:222px" width="368" height="502" viewBox="1782 222 368 502" fill="none"><path d="M1909.8 294 V461" stroke="#222c33" stroke-width="1.2"/><path d="M1909.8 482 V650" stroke="#222c33" stroke-width="1.2"/><path d="M1988 294 V461" stroke="#222c33" stroke-width="1.2"/><path d="M1988 482 V650" stroke="#222c33" stroke-width="1.2"/><path d="M2066.4 294 V461" stroke="#222c33" stroke-width="1.2"/><path d="M2066.4 482 V650" stroke="#222c33" stroke-width="1.2"/><path d="M2144.5 294 V461" stroke="#222c33" stroke-width="1.2"/><path d="M2144.5 482 V650" stroke="#222c33" stroke-width="1.2"/><path d="M1832 349.2 H2150" stroke="#222c33" stroke-width="1.2"/><path d="M1832 404.6 H2150" stroke="#222c33" stroke-width="1.2"/><path d="M1832 537 H2150" stroke="#222c33" stroke-width="1.2"/><path d="M1832 592.3 H2150" stroke="#222c33" stroke-width="1.2"/><path d="M1832.0 416.5 L1833.5 397.8 L1835.0 381.9 L1836.5 368.5 L1838.0 357.0 L1839.5 347.3 L1841.0 339.0 L1842.5 332.0 L1844.0 326.0 L1845.5 320.9 L1847.0 316.6 L1848.5 313.0 L1850.0 309.9 L1851.5 307.2 L1853.0 305.0 L1854.5 303.1 L1856.0 301.4 L1857.5 300.1 L1859.0 298.9 L1860.5 297.9 L1862.0 297.1 L1863.5 296.3 L1865.0 295.7 L1866.5 295.2 L1868.0 294.8 L1869.5 294.4 L1871.0 294.1 L1872.5 293.8 L1874.0 293.6 L1875.5 293.4 L1877.0 293.2 L1878.5 293.1 L1880.0 293.0 L1881.5 292.9 L1883.0 292.8 L1884.5 292.7 L1886.0 292.7 L1887.5 292.6 L1889.0 292.6 L1890.5 292.5 L1892.0 292.5 L1893.5 292.5 L1895.0 292.4 L1896.5 292.4 L1898.0 292.4 L1899.5 292.4 L1901.0 292.4 L1902.5 292.4 L1904.0 292.3 L1905.5 292.3 L1907.0 292.3 L1908.5 292.3 L1910.0 292.3 L1911.5 292.3 L1913.0 292.3 L1914.5 292.3 L1916.0 292.3 L1917.5 292.3 L1919.0 292.3 L1920.5 292.3 L1922.0 292.3 L1923.5 292.3 L1925.0 292.3 L1926.5 292.3 L1928.0 292.3 L1929.5 292.3 L1931.0 292.3 L1932.5 292.3 L1934.0 292.3 L1935.5 292.3 L1937.0 292.3 L1938.5 292.3 L1940.0 292.3 L1941.5 292.3 L1943.0 292.3 L1944.5 292.3 L1946.0 292.3 L1947.5 292.3 L1949.0 292.3 L1950.5 292.3 L1952.0 292.3 L1953.5 292.3 L1955.0 292.3 L1956.5 292.3 L1958.0 292.3 L1959.5 292.3 L1961.0 292.3 L1962.5 292.3 L1964.0 292.3 L1965.5 292.3 L1967.0 292.3 L1968.5 292.3 L1970.0 292.3 L1971.5 292.3 L1973.0 292.3 L1974.5 292.3 L1976.0 292.3 L1977.5 292.3 L1979.0 292.3 L1980.5 292.3 L1982.0 292.3 L1983.5 292.3 L1985.0 292.3 L1985.6 292.3 L1985.9 292.3 L1987.4 314.5 L1988.9 333.7 L1990.4 350.4 L1991.9 364.9 L1993.4 377.4 L1994.9 388.3 L1996.4 397.7 L1997.9 405.8 L1999.4 412.9 L2000.9 419.1 L2002.4 424.4 L2003.9 429.0 L2005.4 433.0 L2006.9 436.4 L2008.4 439.4 L2009.9 442.0 L2011.4 444.3 L2012.9 446.3 L2014.4 448.0 L2015.9 449.4 L2017.4 450.7 L2018.9 451.8 L2020.4 452.8 L2021.9 453.6 L2023.4 454.3 L2024.9 454.9 L2026.4 455.5 L2027.9 455.9 L2029.4 456.4 L2030.9 456.7 L2032.4 457.0 L2033.9 457.3 L2035.4 457.5 L2036.9 457.7 L2038.4 457.9 L2039.9 458.0 L2041.4 458.2 L2042.9 458.3 L2044.4 458.4 L2045.9 458.5 L2047.4 458.5 L2048.9 458.6 L2050.4 458.6 L2051.9 458.7 L2053.4 458.7 L2054.9 458.8 L2056.4 458.8 L2057.9 458.8 L2059.4 458.8 L2060.9 458.9 L2062.4 458.9 L2063.9 458.9 L2065.4 458.9 L2066.9 458.9 L2068.4 458.9 L2069.9 458.9 L2071.4 459.0 L2072.9 459.0 L2074.4 459.0 L2075.9 459.0 L2077.4 459.0 L2078.9 459.0 L2080.4 459.0 L2081.9 459.0 L2083.4 459.0 L2084.9 459.0 L2086.4 459.0 L2087.9 459.0 L2089.4 459.0 L2090.9 459.0 L2092.4 459.0 L2093.9 459.0 L2095.4 459.0 L2096.9 459.0 L2098.4 459.0 L2099.9 459.0 L2101.4 459.0 L2102.9 459.0 L2104.4 459.0 L2105.9 459.0 L2107.4 459.0 L2108.9 459.0 L2110.4 459.0 L2111.9 459.0 L2113.4 459.0 L2114.9 459.0 L2116.4 459.0 L2117.9 459.0 L2119.4 459.0 L2120.9 459.0 L2122.4 459.0 L2123.9 459.0 L2125.4 459.0 L2126.9 459.0 L2128.4 459.0 L2129.9 459.0 L2131.4 459.0 L2132.9 459.0 L2134.4 459.0 L2135.9 459.0 L2137.4 459.0 L2138.9 459.0 L2140.4 459.0 L2141.8 459.0 L2141.9 457.2 L2142.9 440.2 L2143.9 425.0 L2144.9 411.3 L2145.9 399.1 L2146.9 388.1 L2147.9 378.2 L2148.9 369.4 L2149.9 361.4 L2150.0 360.7 L2150 459.5 L1832 459.5Z" fill="#9fb5a8" opacity=".085"/><path d="M1832.0 524.4 L1833.5 542.9 L1835.0 558.7 L1836.5 572.1 L1838.0 583.5 L1839.5 593.1 L1841.0 601.3 L1842.5 608.3 L1844.0 614.2 L1845.5 619.3 L1847.0 623.6 L1848.5 627.2 L1850.0 630.3 L1851.5 632.9 L1853.0 635.1 L1854.5 637.0 L1856.0 638.6 L1857.5 640.0 L1859.0 641.1 L1860.5 642.1 L1862.0 643.0 L1863.5 643.7 L1865.0 644.3 L1866.5 644.8 L1868.0 645.2 L1869.5 645.6 L1871.0 645.9 L1872.5 646.2 L1874.0 646.4 L1875.5 646.6 L1877.0 646.8 L1878.5 646.9 L1880.0 647.0 L1881.5 647.1 L1883.0 647.2 L1884.5 647.3 L1886.0 647.4 L1887.5 647.4 L1889.0 647.4 L1890.5 647.5 L1892.0 647.5 L1893.5 647.5 L1895.0 647.6 L1896.5 647.6 L1898.0 647.6 L1899.5 647.6 L1901.0 647.6 L1902.5 647.6 L1904.0 647.7 L1905.5 647.7 L1907.0 647.7 L1908.5 647.7 L1910.0 647.7 L1911.5 647.7 L1913.0 647.7 L1914.5 647.7 L1916.0 647.7 L1917.5 647.7 L1919.0 647.7 L1920.5 647.7 L1922.0 647.7 L1923.5 647.7 L1925.0 647.7 L1926.5 647.7 L1928.0 647.7 L1929.5 647.7 L1931.0 647.7 L1932.5 647.7 L1934.0 647.7 L1935.5 647.7 L1937.0 647.7 L1938.5 647.7 L1940.0 647.7 L1941.5 647.7 L1943.0 647.7 L1944.5 647.7 L1946.0 647.7 L1947.5 647.7 L1949.0 647.7 L1950.5 647.7 L1952.0 647.7 L1953.5 647.7 L1955.0 647.7 L1956.5 647.7 L1958.0 647.7 L1959.5 647.7 L1961.0 647.7 L1962.5 647.7 L1964.0 647.7 L1965.5 647.7 L1967.0 647.7 L1968.5 647.7 L1970.0 647.7 L1971.5 647.7 L1973.0 647.7 L1974.5 647.7 L1976.0 647.7 L1977.5 647.7 L1979.0 647.7 L1980.5 647.7 L1982.0 647.7 L1983.5 647.7 L1985.0 647.7 L1986.3 647.7 L1986.5 647.7 L1988.0 620.6 L1989.5 597.9 L1991.0 578.9 L1992.5 563.0 L1994.0 549.6 L1995.5 538.4 L1997.0 529.0 L1998.5 521.2 L2000.0 514.6 L2001.5 509.0 L2003.0 504.4 L2004.5 500.5 L2006.0 497.3 L2007.5 494.5 L2009.0 492.3 L2010.5 490.3 L2012.0 488.7 L2013.5 487.4 L2015.0 486.3 L2016.5 485.3 L2018.0 484.5 L2019.5 483.8 L2021.0 483.3 L2022.5 482.8 L2024.0 482.4 L2025.5 482.1 L2027.0 481.8 L2028.5 481.6 L2030.0 481.4 L2031.5 481.2 L2033.0 481.1 L2034.5 481.0 L2036.0 480.9 L2037.5 480.8 L2039.0 480.7 L2040.5 480.7 L2042.0 480.6 L2043.5 480.6 L2045.0 480.6 L2046.5 480.5 L2048.0 480.5 L2049.5 480.5 L2051.0 480.5 L2052.5 480.5 L2054.0 480.5 L2055.5 480.4 L2057.0 480.4 L2058.5 480.4 L2060.0 480.4 L2061.5 480.4 L2063.0 480.4 L2064.5 480.4 L2066.0 480.4 L2067.5 480.4 L2069.0 480.4 L2070.5 480.4 L2072.0 480.4 L2073.5 480.4 L2075.0 480.4 L2076.5 480.4 L2078.0 480.4 L2079.5 480.4 L2081.0 480.4 L2082.5 480.4 L2084.0 480.4 L2085.5 480.4 L2087.0 480.4 L2088.5 480.4 L2090.0 480.4 L2091.5 480.4 L2093.0 480.4 L2094.5 480.4 L2096.0 480.4 L2097.5 480.4 L2099.0 480.4 L2100.5 480.4 L2102.0 480.4 L2103.5 480.4 L2105.0 480.4 L2106.5 480.4 L2108.0 480.4 L2109.5 480.4 L2111.0 480.4 L2112.5 480.4 L2114.0 480.4 L2115.5 480.4 L2117.0 480.4 L2118.5 480.4 L2120.0 480.4 L2121.5 480.4 L2123.0 480.4 L2124.5 480.4 L2126.0 480.4 L2127.5 480.4 L2129.0 480.4 L2130.5 480.4 L2132.0 480.4 L2133.5 480.4 L2135.0 480.4 L2136.5 480.4 L2138.0 480.4 L2139.5 480.4 L2141.0 480.4 L2141.8 480.4 L2141.9 482.2 L2142.9 499.3 L2143.9 514.5 L2144.9 528.3 L2145.9 540.6 L2146.9 551.6 L2147.9 561.5 L2148.9 570.4 L2149.9 578.3 L2150.0 579.1 L2150 648 L1832 648Z" fill="#9fb5c8" opacity=".08"/><path d="M1985.2 293 V459" stroke="#5d7f62" stroke-width="1.4"/><path d="M2141.3 288 V655" stroke="#5d7f62" stroke-width="1.6"/><path d="M1832.0 416.5 L1833.5 397.8 L1835.0 381.9 L1836.5 368.5 L1838.0 357.0 L1839.5 347.3 L1841.0 339.0 L1842.5 332.0 L1844.0 326.0 L1845.5 320.9 L1847.0 316.6 L1848.5 313.0 L1850.0 309.9 L1851.5 307.2 L1853.0 305.0 L1854.5 303.1 L1856.0 301.4 L1857.5 300.1 L1859.0 298.9 L1860.5 297.9 L1862.0 297.1 L1863.5 296.3 L1865.0 295.7 L1866.5 295.2 L1868.0 294.8 L1869.5 294.4 L1871.0 294.1 L1872.5 293.8 L1874.0 293.6 L1875.5 293.4 L1877.0 293.2 L1878.5 293.1 L1880.0 293.0 L1881.5 292.9 L1883.0 292.8 L1884.5 292.7 L1886.0 292.7 L1887.5 292.6 L1889.0 292.6 L1890.5 292.5 L1892.0 292.5 L1893.5 292.5 L1895.0 292.4 L1896.5 292.4 L1898.0 292.4 L1899.5 292.4 L1901.0 292.4 L1902.5 292.4 L1904.0 292.3 L1905.5 292.3 L1907.0 292.3 L1908.5 292.3 L1910.0 292.3 L1911.5 292.3 L1913.0 292.3 L1914.5 292.3 L1916.0 292.3 L1917.5 292.3 L1919.0 292.3 L1920.5 292.3 L1922.0 292.3 L1923.5 292.3 L1925.0 292.3 L1926.5 292.3 L1928.0 292.3 L1929.5 292.3 L1931.0 292.3 L1932.5 292.3 L1934.0 292.3 L1935.5 292.3 L1937.0 292.3 L1938.5 292.3 L1940.0 292.3 L1941.5 292.3 L1943.0 292.3 L1944.5 292.3 L1946.0 292.3 L1947.5 292.3 L1949.0 292.3 L1950.5 292.3 L1952.0 292.3 L1953.5 292.3 L1955.0 292.3 L1956.5 292.3 L1958.0 292.3 L1959.5 292.3 L1961.0 292.3 L1962.5 292.3 L1964.0 292.3 L1965.5 292.3 L1967.0 292.3 L1968.5 292.3 L1970.0 292.3 L1971.5 292.3 L1973.0 292.3 L1974.5 292.3 L1976.0 292.3 L1977.5 292.3 L1979.0 292.3 L1980.5 292.3 L1982.0 292.3 L1983.5 292.3 L1985.0 292.3 L1985.6 292.3 L1985.9 292.3 L1987.4 314.5 L1988.9 333.7 L1990.4 350.4 L1991.9 364.9 L1993.4 377.4 L1994.9 388.3 L1996.4 397.7 L1997.9 405.8 L1999.4 412.9 L2000.9 419.1 L2002.4 424.4 L2003.9 429.0 L2005.4 433.0 L2006.9 436.4 L2008.4 439.4 L2009.9 442.0 L2011.4 444.3 L2012.9 446.3 L2014.4 448.0 L2015.9 449.4 L2017.4 450.7 L2018.9 451.8 L2020.4 452.8 L2021.9 453.6 L2023.4 454.3 L2024.9 454.9 L2026.4 455.5 L2027.9 455.9 L2029.4 456.4 L2030.9 456.7 L2032.4 457.0 L2033.9 457.3 L2035.4 457.5 L2036.9 457.7 L2038.4 457.9 L2039.9 458.0 L2041.4 458.2 L2042.9 458.3 L2044.4 458.4 L2045.9 458.5 L2047.4 458.5 L2048.9 458.6 L2050.4 458.6 L2051.9 458.7 L2053.4 458.7 L2054.9 458.8 L2056.4 458.8 L2057.9 458.8 L2059.4 458.8 L2060.9 458.9 L2062.4 458.9 L2063.9 458.9 L2065.4 458.9 L2066.9 458.9 L2068.4 458.9 L2069.9 458.9 L2071.4 459.0 L2072.9 459.0 L2074.4 459.0 L2075.9 459.0 L2077.4 459.0 L2078.9 459.0 L2080.4 459.0 L2081.9 459.0 L2083.4 459.0 L2084.9 459.0 L2086.4 459.0 L2087.9 459.0 L2089.4 459.0 L2090.9 459.0 L2092.4 459.0 L2093.9 459.0 L2095.4 459.0 L2096.9 459.0 L2098.4 459.0 L2099.9 459.0 L2101.4 459.0 L2102.9 459.0 L2104.4 459.0 L2105.9 459.0 L2107.4 459.0 L2108.9 459.0 L2110.4 459.0 L2111.9 459.0 L2113.4 459.0 L2114.9 459.0 L2116.4 459.0 L2117.9 459.0 L2119.4 459.0 L2120.9 459.0 L2122.4 459.0 L2123.9 459.0 L2125.4 459.0 L2126.9 459.0 L2128.4 459.0 L2129.9 459.0 L2131.4 459.0 L2132.9 459.0 L2134.4 459.0 L2135.9 459.0 L2137.4 459.0 L2138.9 459.0 L2140.4 459.0 L2141.8 459.0 L2141.9 457.2 L2142.9 440.2 L2143.9 425.0 L2144.9 411.3 L2145.9 399.1 L2146.9 388.1 L2147.9 378.2 L2148.9 369.4 L2149.9 361.4 L2150.0 360.7" stroke="#a9f5b3" stroke-width="2" stroke-linejoin="round"/><path d="M1832.0 524.4 L1833.5 542.9 L1835.0 558.7 L1836.5 572.1 L1838.0 583.5 L1839.5 593.1 L1841.0 601.3 L1842.5 608.3 L1844.0 614.2 L1845.5 619.3 L1847.0 623.6 L1848.5 627.2 L1850.0 630.3 L1851.5 632.9 L1853.0 635.1 L1854.5 637.0 L1856.0 638.6 L1857.5 640.0 L1859.0 641.1 L1860.5 642.1 L1862.0 643.0 L1863.5 643.7 L1865.0 644.3 L1866.5 644.8 L1868.0 645.2 L1869.5 645.6 L1871.0 645.9 L1872.5 646.2 L1874.0 646.4 L1875.5 646.6 L1877.0 646.8 L1878.5 646.9 L1880.0 647.0 L1881.5 647.1 L1883.0 647.2 L1884.5 647.3 L1886.0 647.4 L1887.5 647.4 L1889.0 647.4 L1890.5 647.5 L1892.0 647.5 L1893.5 647.5 L1895.0 647.6 L1896.5 647.6 L1898.0 647.6 L1899.5 647.6 L1901.0 647.6 L1902.5 647.6 L1904.0 647.7 L1905.5 647.7 L1907.0 647.7 L1908.5 647.7 L1910.0 647.7 L1911.5 647.7 L1913.0 647.7 L1914.5 647.7 L1916.0 647.7 L1917.5 647.7 L1919.0 647.7 L1920.5 647.7 L1922.0 647.7 L1923.5 647.7 L1925.0 647.7 L1926.5 647.7 L1928.0 647.7 L1929.5 647.7 L1931.0 647.7 L1932.5 647.7 L1934.0 647.7 L1935.5 647.7 L1937.0 647.7 L1938.5 647.7 L1940.0 647.7 L1941.5 647.7 L1943.0 647.7 L1944.5 647.7 L1946.0 647.7 L1947.5 647.7 L1949.0 647.7 L1950.5 647.7 L1952.0 647.7 L1953.5 647.7 L1955.0 647.7 L1956.5 647.7 L1958.0 647.7 L1959.5 647.7 L1961.0 647.7 L1962.5 647.7 L1964.0 647.7 L1965.5 647.7 L1967.0 647.7 L1968.5 647.7 L1970.0 647.7 L1971.5 647.7 L1973.0 647.7 L1974.5 647.7 L1976.0 647.7 L1977.5 647.7 L1979.0 647.7 L1980.5 647.7 L1982.0 647.7 L1983.5 647.7 L1985.0 647.7 L1986.3 647.7 L1986.5 647.7 L1988.0 620.6 L1989.5 597.9 L1991.0 578.9 L1992.5 563.0 L1994.0 549.6 L1995.5 538.4 L1997.0 529.0 L1998.5 521.2 L2000.0 514.6 L2001.5 509.0 L2003.0 504.4 L2004.5 500.5 L2006.0 497.3 L2007.5 494.5 L2009.0 492.3 L2010.5 490.3 L2012.0 488.7 L2013.5 487.4 L2015.0 486.3 L2016.5 485.3 L2018.0 484.5 L2019.5 483.8 L2021.0 483.3 L2022.5 482.8 L2024.0 482.4 L2025.5 482.1 L2027.0 481.8 L2028.5 481.6 L2030.0 481.4 L2031.5 481.2 L2033.0 481.1 L2034.5 481.0 L2036.0 480.9 L2037.5 480.8 L2039.0 480.7 L2040.5 480.7 L2042.0 480.6 L2043.5 480.6 L2045.0 480.6 L2046.5 480.5 L2048.0 480.5 L2049.5 480.5 L2051.0 480.5 L2052.5 480.5 L2054.0 480.5 L2055.5 480.4 L2057.0 480.4 L2058.5 480.4 L2060.0 480.4 L2061.5 480.4 L2063.0 480.4 L2064.5 480.4 L2066.0 480.4 L2067.5 480.4 L2069.0 480.4 L2070.5 480.4 L2072.0 480.4 L2073.5 480.4 L2075.0 480.4 L2076.5 480.4 L2078.0 480.4 L2079.5 480.4 L2081.0 480.4 L2082.5 480.4 L2084.0 480.4 L2085.5 480.4 L2087.0 480.4 L2088.5 480.4 L2090.0 480.4 L2091.5 480.4 L2093.0 480.4 L2094.5 480.4 L2096.0 480.4 L2097.5 480.4 L2099.0 480.4 L2100.5 480.4 L2102.0 480.4 L2103.5 480.4 L2105.0 480.4 L2106.5 480.4 L2108.0 480.4 L2109.5 480.4 L2111.0 480.4 L2112.5 480.4 L2114.0 480.4 L2115.5 480.4 L2117.0 480.4 L2118.5 480.4 L2120.0 480.4 L2121.5 480.4 L2123.0 480.4 L2124.5 480.4 L2126.0 480.4 L2127.5 480.4 L2129.0 480.4 L2130.5 480.4 L2132.0 480.4 L2133.5 480.4 L2135.0 480.4 L2136.5 480.4 L2138.0 480.4 L2139.5 480.4 L2141.0 480.4 L2141.8 480.4 L2141.9 482.2 L2142.9 499.3 L2143.9 514.5 L2144.9 528.3 L2145.9 540.6 L2146.9 551.6 L2147.9 561.5 L2148.9 570.4 L2149.9 578.3 L2150.0 579.1" stroke="#8ed4ff" stroke-width="2" stroke-linejoin="round"/><circle cx="1985.6" cy="293" r="5.6" fill="#a9f5b3"/><circle cx="2141.3" cy="287.3" r="5.6" fill="#a9f5b3"/><circle cx="2141.3" cy="655.3" r="5.6" fill="#8ed4ff"/></svg>
<div class="t" style="top:754px;font-size:43px;color:#9b9b9b;line-height:0;white-space:nowrap;letter-spacing:-1.802px;left:1407.299px;width:1000px;text-align:center;">Tremolo</div>
<svg style="left:1563.0px;top:106.4px" width="124.9" height="238.9" viewBox="1563.0 106.4 124.9 238.9"><polygon points="1677.3,108.4 1581.8,299.6 1590.4,303.9 1685.9,112.6" fill="#fdf750"/><polygon points="1565,343.3 1565,288.5 1609,311" fill="#fdf750"/></svg>
<svg style="left:536.2px;top:547.8px" width="110.7" height="230.8" viewBox="536.2 547.8 110.7 230.8"><polygon points="547.0,776.6 627.1,595.5 618.3,591.6 538.2,772.8" fill="#fdf750"/><polygon points="641.7,549.8 599,584.9 644.9,605.9" fill="#fdf750"/></svg>
<svg style="left:1688.3px;top:1233.4px" width="124.1" height="238.6" viewBox="1688.3 1233.4 124.1 238.6"><polygon points="1801.8,1235.4 1707.1,1425.0 1715.7,1429.3 1810.4,1239.6" fill="#fdf750"/><polygon points="1690.3,1470 1690.3,1414.3 1734.3,1436.5" fill="#fdf750"/></svg>
</div></body></html>
